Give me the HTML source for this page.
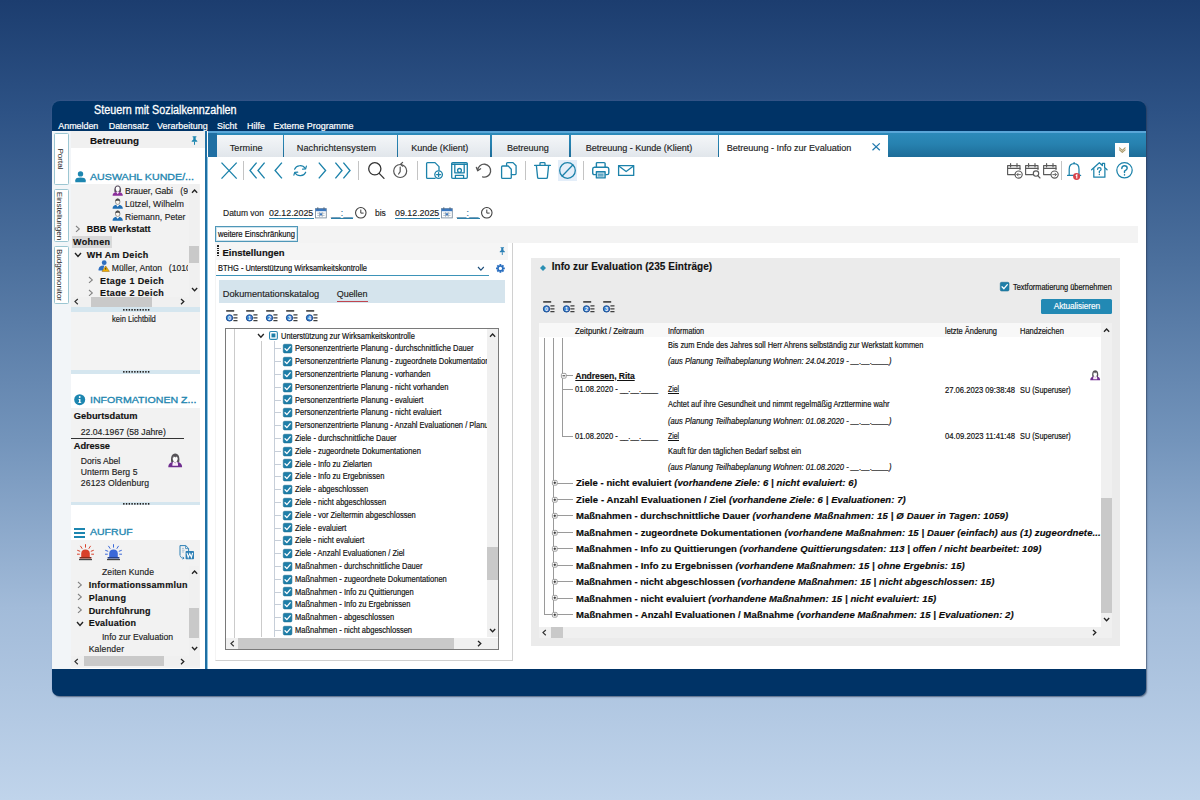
<!DOCTYPE html>
<html><head><meta charset="utf-8"><title>Steuern mit Sozialkennzahlen</title>
<style>
html,body{margin:0;padding:0;}
body{width:1200px;height:800px;overflow:hidden;position:relative;font-family:"Liberation Sans",sans-serif;color:#1a1a1a;
background:linear-gradient(180deg,#1c3d6f 0%,#2d5285 14%,#4c709d 33%,#7394bb 55%,#a2bbd9 76%,#c0d4eb 100%);}
div,svg,span.t{position:absolute;}
span.t{white-space:pre;}
svg{overflow:visible;}
</style></head><body>
<div style="left:52px;top:100.7px;width:1094px;height:595.3px;background:#003366;border-radius:8px 8px 7px 7px;box-shadow:1px 1px 1.5px rgba(30,45,70,.6),0 0 2px rgba(150,180,220,.25);"></div>
<div style="left:52.00px;top:131.20px;width:1094.00px;height:538.00px;background:#fff;"></div>
<span class="t" style="left:94.00px;top:103.72px;font-size:12.5px;line-height:1;color:#fff;transform:scaleX(0.8617);transform-origin:0 0;-webkit-text-stroke:.3px #fff;">Steuern mit Sozialkennzahlen</span>
<span class="t" style="left:58.30px;top:122.22px;font-size:8.95px;line-height:1;color:#fff;letter-spacing:-0.031px;-webkit-text-stroke:.2px #fff;">Anmelden</span>
<span class="t" style="left:108.70px;top:122.22px;font-size:8.95px;line-height:1;color:#fff;-webkit-text-stroke:.2px #fff;">Datensatz</span>
<span class="t" style="left:157.00px;top:122.22px;font-size:8.95px;line-height:1;color:#fff;-webkit-text-stroke:.2px #fff;">Verarbeitung</span>
<span class="t" style="left:217.00px;top:122.22px;font-size:8.95px;line-height:1;color:#fff;-webkit-text-stroke:.2px #fff;">Sicht</span>
<span class="t" style="left:247.00px;top:122.22px;font-size:8.95px;line-height:1;color:#fff;-webkit-text-stroke:.2px #fff;">Hilfe</span>
<span class="t" style="left:273.50px;top:122.22px;font-size:8.95px;line-height:1;color:#fff;-webkit-text-stroke:.2px #fff;">Externe Programme</span>
<div style="left:52.00px;top:131.20px;width:18.80px;height:538.00px;background:#f2f5f8;"></div>
<div style="left:53.7px;top:133.1px;width:15.3px;height:52.099999999999994px;background:#fff;border:1.2px solid #9cc6d2;border-radius:1.5px;box-sizing:border-box;"></div>
<span class="t" style="left:48.82px;top:155.10px;font-size:8.1px;line-height:1;transform:rotate(90deg);transform-origin:50% 50%;color:#222;">Portal</span>
<div style="left:53.7px;top:189.4px;width:15.3px;height:52.400000000000006px;background:#fff;border:1.2px solid #9cc6d2;border-radius:1.5px;box-sizing:border-box;"></div>
<span class="t" style="left:35.24px;top:211.58px;font-size:8.05px;line-height:1;transform:rotate(90deg);transform-origin:50% 50%;color:#222;">Einstellungen</span>
<div style="left:53.7px;top:246.4px;width:15.3px;height:57.599999999999994px;background:#fff;border:1.2px solid #9cc6d2;border-radius:1.5px;box-sizing:border-box;"></div>
<span class="t" style="left:33.38px;top:271.20px;font-size:8.0px;line-height:1;transform:rotate(90deg);transform-origin:50% 50%;color:#222;">Budgetmonitor</span>
<div style="left:70.80px;top:131.20px;width:134.40px;height:16.80px;background:#f0f0f0;"></div>
<span class="t" style="left:90.00px;top:136.20px;font-size:9.8px;line-height:1;font-weight:bold;color:#111;-webkit-text-stroke:.15px #111;">Betreuung</span>
<svg style="left:191.20px;top:135.60px;" width="7.00" height="9.00" viewBox="0 0 7 9"><path d="M1.6 0.3 H5.4 V1.2 H4.7 V3.6 L6.3 5 V5.7 H0.7 V5 L2.3 3.6 V1.2 H1.6 Z" fill="#1d86b0"/><path d="M3.5 5.7 V8.8" stroke="#1d86b0" stroke-width="1"/></svg>
<svg style="left:74.60px;top:170.80px;" width="11.00" height="11.40" viewBox="0 0 11 11.4"><circle cx="5.5" cy="2.9" r="2.7" fill="#1d86b0"/><path d="M0.3 11.2 V9.2 C0.3 7.2 2.4 6.5 5.5 6.5 C8.6 6.5 10.7 7.2 10.7 9.2 V11.2 Z" fill="#1d86b0"/></svg>
<span class="t" style="left:90.30px;top:172.60px;font-size:9.1px;line-height:1;color:#1d86b0;transform:scaleX(1.1716);transform-origin:0 0;-webkit-text-stroke:.3px #1d86b0;">AUSWAHL KUNDE/...</span>
<div style="left:70.80px;top:184.00px;width:129.20px;height:124.40px;background:#f2f2f2;"></div>
<div style="left:70.8px;top:184px;width:117.6px;height:112px;overflow:hidden;">
<svg style="left:41.00px;top:0.80px;" width="11.40" height="11.00" viewBox="0 0 12 12"><path d="M0.4 11.7 C0.4 9 2 8 4 7.5 H8 C10 8 11.6 9 11.6 11.7 Z" fill="#8b2f9b"/><path d="M2.5 7.6 C1.7 3.2 3.4 0.5 6 0.5 C8.6 0.5 10.3 3.2 9.5 7.6 Z" fill="#5a4f60"/><ellipse cx="6" cy="4.3" rx="2.15" ry="2.6" fill="#fff"/><path d="M4.3 7.6 L6 10 L7.7 7.6 L6 6.6 Z" fill="#f4e3f4"/></svg>
<span class="t" style="left:54.20px;top:3.42px;font-size:8.6px;line-height:1;color:#222;letter-spacing:-0.021px;-webkit-text-stroke:.15px #222;">Brauer, Gabi</span>
<span class="t" style="left:109.50px;top:3.42px;font-size:8.6px;line-height:1;color:#222;-webkit-text-stroke:.15px #222;">(9</span>
<svg style="left:41.00px;top:13.60px;" width="11.40" height="11.00" viewBox="0 0 12 12"><path d="M0.4 11.7 C0.4 8.9 2.2 7.9 4.2 7.4 L6 9.6 L7.8 7.4 C9.8 7.9 11.6 8.9 11.6 11.7 Z" fill="#1f6fb5"/><path d="M4.5 7.3 L6 9.3 L7.5 7.3 L6 6.8 Z" fill="#fff"/><ellipse cx="6" cy="4.1" rx="2.45" ry="3" fill="#fdf7ee" stroke="#777" stroke-width=".8"/><path d="M3.5 3.8 C3.3 1.5 4.6 0.6 6 0.6 C7.4 0.6 8.7 1.5 8.5 3.8 C7.7 2.7 4.3 2.7 3.5 3.8 Z" fill="#4c4c4c"/></svg>
<span class="t" style="left:54.20px;top:16.22px;font-size:8.6px;line-height:1;color:#222;letter-spacing:0.049px;-webkit-text-stroke:.15px #222;">Lützel, Wilhelm</span>
<svg style="left:41.00px;top:26.40px;" width="11.40" height="11.00" viewBox="0 0 12 12"><path d="M0.4 11.7 C0.4 8.9 2.2 7.9 4.2 7.4 L6 9.6 L7.8 7.4 C9.8 7.9 11.6 8.9 11.6 11.7 Z" fill="#1f6fb5"/><path d="M4.5 7.3 L6 9.3 L7.5 7.3 L6 6.8 Z" fill="#fff"/><ellipse cx="6" cy="4.1" rx="2.45" ry="3" fill="#fdf7ee" stroke="#777" stroke-width=".8"/><path d="M3.5 3.8 C3.3 1.5 4.6 0.6 6 0.6 C7.4 0.6 8.7 1.5 8.5 3.8 C7.7 2.7 4.3 2.7 3.5 3.8 Z" fill="#4c4c4c"/></svg>
<span class="t" style="left:54.20px;top:29.02px;font-size:8.6px;line-height:1;color:#222;letter-spacing:0.056px;-webkit-text-stroke:.15px #222;">Riemann, Peter</span>
<svg style="left:4.20px;top:41.20px;" width="5.30" height="7.80" viewBox="-1 -1 5.3 7.8"><path d="M0 0 L3.3 2.9 L0 5.8" fill="none" stroke="#808080" stroke-width="1.1"/></svg>
<span class="t" style="left:15.90px;top:41.48px;font-size:9.0px;line-height:1;font-weight:bold;color:#111;letter-spacing:0.088px;-webkit-text-stroke:.15px #111;">BBB Werkstatt</span>
<div style="left:0.90px;top:51.80px;width:40.80px;height:11.80px;background:#d9d9d9;"></div>
<span class="t" style="left:2.20px;top:54.28px;font-size:9.0px;line-height:1;font-weight:bold;color:#111;letter-spacing:0.329px;-webkit-text-stroke:.15px #111;">Wohnen</span>
<svg style="left:2.90px;top:67.80px;" width="8.00" height="5.40" viewBox="-1 -1 8 5.4"><path d="M0 0 L3.0 3.4 L6 0" fill="none" stroke="#222" stroke-width="1.4"/></svg>
<span class="t" style="left:15.90px;top:67.08px;font-size:9.0px;line-height:1;font-weight:bold;color:#111;letter-spacing:0.284px;-webkit-text-stroke:.15px #111;">WH Am Deich</span>
<svg style="left:27.20px;top:76.40px;" width="11.60" height="11.60" viewBox="0 0 12 12"><circle cx="6.4" cy="2.8" r="2.5" fill="#2f6fc0"/><path d="M0.6 9.6 C1 6.6 3.2 5.4 6.6 5.8 L5.2 10.8 H0.6 Z" fill="#2f6fc0"/><path d="M8 6.2 L11.8 11.8 H4.2 Z" fill="#f5b400" stroke="#8a5a00" stroke-width=".5"/><path d="M8 8 V10" stroke="#222" stroke-width=".9"/></svg>
<span class="t" style="left:40.90px;top:80.22px;font-size:8.6px;line-height:1;color:#222;letter-spacing:0.062px;-webkit-text-stroke:.15px #222;">Müller, Anton</span>
<span class="t" style="left:98.00px;top:80.22px;font-size:8.6px;line-height:1;color:#222;-webkit-text-stroke:.15px #222;">(1010</span>
<svg style="left:17.20px;top:92.40px;" width="5.30" height="7.80" viewBox="-1 -1 5.3 7.8"><path d="M0 0 L3.3 2.9 L0 5.8" fill="none" stroke="#808080" stroke-width="1.1"/></svg>
<span class="t" style="left:29.20px;top:92.68px;font-size:9.0px;line-height:1;font-weight:bold;color:#111;letter-spacing:0.398px;-webkit-text-stroke:.15px #111;">Etage 1 Deich</span>
<svg style="left:17.20px;top:105.20px;" width="5.30" height="7.80" viewBox="-1 -1 5.3 7.8"><path d="M0 0 L3.3 2.9 L0 5.8" fill="none" stroke="#808080" stroke-width="1.1"/></svg>
<span class="t" style="left:29.20px;top:105.48px;font-size:9.0px;line-height:1;font-weight:bold;color:#111;letter-spacing:0.398px;-webkit-text-stroke:.15px #111;">Etage 2 Deich</span>
</div>
<div style="left:189.00px;top:184.00px;width:10.40px;height:112.70px;background:#f0f0f0;"></div>
<div style="left:189.00px;top:245.80px;width:10.40px;height:17.50px;background:#c9c9c9;"></div>
<svg style="left:190.60px;top:188.80px;" width="7.20" height="4.80" viewBox="-1 -1 7.2 4.8"><path d="M0 2.8 L2.6 0 L5.2 2.8" fill="none" stroke="#222" stroke-width="1.3"/></svg>
<svg style="left:190.60px;top:287.40px;" width="7.20" height="4.80" viewBox="-1 -1 7.2 4.8"><path d="M0 0 L2.6 2.8 L5.2 0" fill="none" stroke="#222" stroke-width="1.3"/></svg>
<div style="left:70.80px;top:296.50px;width:129.20px;height:10.60px;background:#f0f0f0;"></div>
<div style="left:91.30px;top:296.50px;width:60.70px;height:10.60px;background:#c9c9c9;"></div>
<svg style="left:74.40px;top:298.20px;" width="4.80" height="7.20" viewBox="-1 -1 4.8 7.2"><path d="M2.8 0 L0 2.6 L2.8 5.2" fill="none" stroke="#333" stroke-width="1.2"/></svg>
<svg style="left:179.80px;top:298.20px;" width="4.80" height="7.20" viewBox="-1 -1 4.8 7.2"><path d="M0 0 L2.8 2.6 L0 5.2" fill="none" stroke="#222" stroke-width="1.3"/></svg>
<div style="left:189.00px;top:296.50px;width:11.00px;height:10.60px;background:#f0f0f0;"></div>
<div style="left:70.80px;top:307.10px;width:129.20px;height:4.60px;background:#d5e6ef;"></div>
<svg style="left:123.00px;top:308.65px;" width="27.00" height="1.70" viewBox="0 0 27 1.7"><g fill="#222"><rect x="0.00" y="0" width="1.45" height="1.7"/><rect x="2.78" y="0" width="1.45" height="1.7"/><rect x="5.56" y="0" width="1.45" height="1.7"/><rect x="8.34" y="0" width="1.45" height="1.7"/><rect x="11.12" y="0" width="1.45" height="1.7"/><rect x="13.90" y="0" width="1.45" height="1.7"/><rect x="16.68" y="0" width="1.45" height="1.7"/><rect x="19.46" y="0" width="1.45" height="1.7"/><rect x="22.24" y="0" width="1.45" height="1.7"/><rect x="25.02" y="0" width="1.45" height="1.7"/></g></svg>
<div style="left:70.80px;top:311.70px;width:129.20px;height:58.30px;background:#f3f3f3;"></div>
<span class="t" style="left:112.00px;top:315.29px;font-size:8.4px;line-height:1;transform:scaleX(0.9045);transform-origin:0 0;color:#222;-webkit-text-stroke:0.18px #222;">kein Lichtbild</span>
<div style="left:70.80px;top:369.70px;width:129.20px;height:4.00px;background:#d5e6ef;"></div>
<svg style="left:123.00px;top:370.95px;" width="27.00" height="1.70" viewBox="0 0 27 1.7"><g fill="#222"><rect x="0.00" y="0" width="1.45" height="1.7"/><rect x="2.78" y="0" width="1.45" height="1.7"/><rect x="5.56" y="0" width="1.45" height="1.7"/><rect x="8.34" y="0" width="1.45" height="1.7"/><rect x="11.12" y="0" width="1.45" height="1.7"/><rect x="13.90" y="0" width="1.45" height="1.7"/><rect x="16.68" y="0" width="1.45" height="1.7"/><rect x="19.46" y="0" width="1.45" height="1.7"/><rect x="22.24" y="0" width="1.45" height="1.7"/><rect x="25.02" y="0" width="1.45" height="1.7"/></g></svg>
<svg style="left:74.00px;top:394.40px;" width="11.40" height="11.40" viewBox="0 0 12 12"><circle cx="6" cy="6" r="5.8" fill="#1d86b0"/><circle cx="6" cy="3.2" r="1" fill="#fff"/><path d="M4.7 5.2 H6.8 V8.6 H7.6 V9.5 H4.5 V8.6 H5.3 V6.1 H4.7 Z" fill="#fff"/></svg>
<span class="t" style="left:90.30px;top:396.20px;font-size:9.1px;line-height:1;color:#1d86b0;transform:scaleX(1.1656);transform-origin:0 0;-webkit-text-stroke:.3px #1d86b0;">INFORMATIONEN Z...</span>
<div style="left:70.80px;top:408.00px;width:129.20px;height:93.70px;background:#f2f2f2;"></div>
<span class="t" style="left:73.80px;top:412.13px;font-size:9.3px;line-height:1;font-weight:bold;color:#111;letter-spacing:0.013px;-webkit-text-stroke:.15px #111;">Geburtsdatum</span>
<span class="t" style="left:80.80px;top:428.09px;font-size:8.64px;line-height:1;color:#222;letter-spacing:0.006px;-webkit-text-stroke:.15px #222;">22.04.1967 (58 Jahre)</span>
<div style="left:71.30px;top:437.80px;width:112.50px;height:1.00px;background:#333;"></div>
<span class="t" style="left:73.80px;top:442.03px;font-size:9.3px;line-height:1;font-weight:bold;color:#111;letter-spacing:-0.100px;-webkit-text-stroke:.15px #111;">Adresse</span>
<span class="t" style="left:80.80px;top:457.19px;font-size:8.64px;line-height:1;color:#222;letter-spacing:0.019px;-webkit-text-stroke:.15px #222;">Doris Abel</span>
<span class="t" style="left:80.80px;top:468.09px;font-size:8.64px;line-height:1;color:#222;letter-spacing:0.047px;-webkit-text-stroke:.15px #222;">Unterm Berg 5</span>
<span class="t" style="left:80.80px;top:478.89px;font-size:8.64px;line-height:1;color:#222;letter-spacing:0.122px;-webkit-text-stroke:.15px #222;">26123 Oldenburg</span>
<svg style="left:168.00px;top:452.70px;" width="14.40" height="14.60" viewBox="0 0 14.4 14.6"><path d="M3.3 9.6 C2.2 4.2 3.9 0.4 7.2 0.4 C10.5 0.4 12.2 4.2 11.1 9.6 Z" fill="#555257"/><path d="M0.3 14.3 C0.3 10.8 2.4 9.8 4.6 9.1 H9.8 C12 9.8 14.1 10.8 14.1 14.3 Z" fill="#6f2d8f"/><path d="M5 8.9 C4.5 10.4 4.1 12.2 4.5 12.7 H9.9 C10.3 12.2 9.9 10.4 9.4 8.9 L8.2 8.2 H6.2 Z" fill="#fbeefb"/><path d="M6.2 9.2 L7.2 9.9 L8.2 9.2" fill="none" stroke="#6a5a70" stroke-width=".5"/><path d="M7.2 2.9 C8.9 2.9 9.8 4.2 9.7 5.8 C9.6 7.7 8.5 9.1 7.2 9.1 C5.9 9.1 4.8 7.7 4.7 5.8 C4.6 4.2 5.5 2.9 7.2 2.9 Z" fill="#fff"/><path d="M4.8 5.4 C5.4 4 6.4 3.6 7.6 4.4 C8.2 3.8 9.2 3.8 9.6 5 C9.4 2.6 5 2.2 4.8 5.4 Z" fill="#555257"/></svg>
<div style="left:70.80px;top:501.50px;width:129.20px;height:3.80px;background:#d5e6ef;"></div>
<svg style="left:123.00px;top:502.65px;" width="27.00" height="1.70" viewBox="0 0 27 1.7"><g fill="#222"><rect x="0.00" y="0" width="1.45" height="1.7"/><rect x="2.78" y="0" width="1.45" height="1.7"/><rect x="5.56" y="0" width="1.45" height="1.7"/><rect x="8.34" y="0" width="1.45" height="1.7"/><rect x="11.12" y="0" width="1.45" height="1.7"/><rect x="13.90" y="0" width="1.45" height="1.7"/><rect x="16.68" y="0" width="1.45" height="1.7"/><rect x="19.46" y="0" width="1.45" height="1.7"/><rect x="22.24" y="0" width="1.45" height="1.7"/><rect x="25.02" y="0" width="1.45" height="1.7"/></g></svg>
<div style="left:74.00px;top:528.20px;width:11.30px;height:1.50px;background:#1d86b0;"></div>
<div style="left:74.00px;top:532.10px;width:11.30px;height:1.50px;background:#1d86b0;"></div>
<div style="left:74.00px;top:536.00px;width:11.30px;height:1.50px;background:#1d86b0;"></div>
<span class="t" style="left:90.30px;top:527.90px;font-size:9.1px;line-height:1;color:#1d86b0;transform:scaleX(1.1575);transform-origin:0 0;-webkit-text-stroke:.3px #1d86b0;">AUFRUF</span>
<div style="left:70.80px;top:539.70px;width:129.20px;height:128.80px;background:#f2f2f2;"></div>
<svg style="left:76.50px;top:543.60px;" width="17.00" height="16.40" viewBox="0 0 17 16.4"><path d="M4.2 13 V9.6 C4.2 6.8 6 5.4 8.5 5.4 C11 5.4 12.8 6.8 12.8 9.6 V13 Z" fill="#d8402a"/><rect x="2.6" y="13" width="11.8" height="1.6" fill="#8a2a1a"/><rect x="2" y="15" width="13" height="1.2" fill="#444"/><g stroke="#d8402a" stroke-width="1" stroke-linecap="round"><path d="M8.5 0.6 V3.2"/><path d="M3.6 2.2 L5 4.4"/><path d="M13.4 2.2 L12 4.4"/><path d="M0.6 6.4 L2.8 7.2"/><path d="M16.4 6.4 L14.2 7.2"/><path d="M0.4 10.2 H2.4"/><path d="M16.6 10.2 H14.6"/></g></svg>
<svg style="left:105.00px;top:543.60px;" width="17.00" height="16.40" viewBox="0 0 17 16.4"><path d="M4.2 13 V9.6 C4.2 6.8 6 5.4 8.5 5.4 C11 5.4 12.8 6.8 12.8 9.6 V13 Z" fill="#3a68d8"/><rect x="2.6" y="13" width="11.8" height="1.6" fill="#24408a"/><rect x="2" y="15" width="13" height="1.2" fill="#444"/><g stroke="#3a68d8" stroke-width="1" stroke-linecap="round"><path d="M8.5 0.6 V3.2"/><path d="M3.6 2.2 L5 4.4"/><path d="M13.4 2.2 L12 4.4"/><path d="M0.6 6.4 L2.8 7.2"/><path d="M16.4 6.4 L14.2 7.2"/><path d="M0.4 10.2 H2.4"/><path d="M16.6 10.2 H14.6"/></g></svg>
<svg style="left:179.00px;top:545.30px;" width="15.40" height="14.60" viewBox="0 0 15.4 14.6"><path d="M1 0.6 H6.8 L9.6 3.4 V6" fill="none" stroke="#2d7fb5" stroke-width="1"/><path d="M1 0.6 V10.4" stroke="#2d7fb5" stroke-width="1"/><path d="M6.6 0.8 V3.6 H9.4" fill="none" stroke="#2d7fb5" stroke-width=".8"/><path d="M3 3.4 H5 M3 5.2 H5.6 M3 7 H5" stroke="#8fb5d0" stroke-width=".8"/><path d="M1.2 10.6 C1.6 12.6 3 13.4 5 13.2 M5 13.2 L3.8 11.8 M5 13.2 L3.6 14.2" fill="none" stroke="#2d7fb5" stroke-width=".9"/><rect x="6.6" y="6" width="8.4" height="8.2" rx=".8" fill="#2d7fb5"/><path d="M8 7.8 L9.2 12.4 L10.8 8.6 L12.4 12.4 L13.6 7.8" fill="none" stroke="#fff" stroke-width="1.1"/></svg>
<div style="left:70.8px;top:560px;width:117.6px;height:95.6px;overflow:hidden;">
<span class="t" style="left:31.20px;top:8.32px;font-size:8.6px;line-height:1;color:#222;letter-spacing:0.073px;-webkit-text-stroke:.15px #222;">Zeiten Kunde</span>
<svg style="left:5.80px;top:20.55px;" width="5.30" height="7.80" viewBox="-1 -1 5.3 7.8"><path d="M0 0 L3.3 2.9 L0 5.8" fill="none" stroke="#808080" stroke-width="1.1"/></svg>
<span class="t" style="left:17.90px;top:20.83px;font-size:9.0px;line-height:1;font-weight:bold;color:#111;letter-spacing:0.262px;-webkit-text-stroke:.15px #111;">Informationssammlun</span>
<svg style="left:5.80px;top:33.40px;" width="5.30" height="7.80" viewBox="-1 -1 5.3 7.8"><path d="M0 0 L3.3 2.9 L0 5.8" fill="none" stroke="#808080" stroke-width="1.1"/></svg>
<span class="t" style="left:17.90px;top:33.68px;font-size:9.0px;line-height:1;font-weight:bold;color:#111;letter-spacing:0.286px;-webkit-text-stroke:.15px #111;">Planung</span>
<svg style="left:5.80px;top:46.25px;" width="5.30" height="7.80" viewBox="-1 -1 5.3 7.8"><path d="M0 0 L3.3 2.9 L0 5.8" fill="none" stroke="#808080" stroke-width="1.1"/></svg>
<span class="t" style="left:17.90px;top:46.53px;font-size:9.0px;line-height:1;font-weight:bold;color:#111;letter-spacing:0.167px;-webkit-text-stroke:.15px #111;">Durchführung</span>
<svg style="left:4.80px;top:61.00px;" width="8.00" height="5.40" viewBox="-1 -1 8 5.4"><path d="M0 0 L3.0 3.4 L6 0" fill="none" stroke="#222" stroke-width="1.4"/></svg>
<span class="t" style="left:17.90px;top:59.38px;font-size:9.0px;line-height:1;font-weight:bold;color:#111;letter-spacing:0.198px;-webkit-text-stroke:.15px #111;">Evaluation</span>
<span class="t" style="left:31.20px;top:72.57px;font-size:8.6px;line-height:1;color:#222;letter-spacing:-0.010px;-webkit-text-stroke:.15px #222;">Info zur Evaluation</span>
<span class="t" style="left:17.90px;top:85.42px;font-size:8.6px;line-height:1;color:#222;letter-spacing:0.137px;-webkit-text-stroke:.15px #222;">Kalender</span>
</div>
<div style="left:189.00px;top:566.00px;width:10.40px;height:89.80px;background:#f0f0f0;"></div>
<div style="left:189.00px;top:608.30px;width:10.40px;height:29.70px;background:#c9c9c9;"></div>
<svg style="left:190.60px;top:569.60px;" width="7.20" height="4.80" viewBox="-1 -1 7.2 4.8"><path d="M0 2.8 L2.6 0 L5.2 2.8" fill="none" stroke="#222" stroke-width="1.3"/></svg>
<svg style="left:190.60px;top:646.20px;" width="7.20" height="4.80" viewBox="-1 -1 7.2 4.8"><path d="M0 0 L2.6 2.8 L5.2 0" fill="none" stroke="#222" stroke-width="1.3"/></svg>
<div style="left:70.80px;top:655.80px;width:129.20px;height:10.60px;background:#f0f0f0;"></div>
<div style="left:84.00px;top:655.80px;width:79.80px;height:10.60px;background:#c9c9c9;"></div>
<svg style="left:74.40px;top:657.50px;" width="4.80" height="7.20" viewBox="-1 -1 4.8 7.2"><path d="M2.8 0 L0 2.6 L2.8 5.2" fill="none" stroke="#333" stroke-width="1.2"/></svg>
<svg style="left:179.80px;top:657.50px;" width="4.80" height="7.20" viewBox="-1 -1 4.8 7.2"><path d="M0 0 L2.8 2.6 L0 5.2" fill="none" stroke="#222" stroke-width="1.3"/></svg>
<div style="left:189.00px;top:655.80px;width:11.00px;height:10.60px;background:#f0f0f0;"></div>
<div style="left:205.10px;top:131.20px;width:1.80px;height:537.60px;background:#1f6fa3;"></div>
<div style="left:206.90px;top:157.00px;width:0.70px;height:511.80px;background:#8cc4e2;"></div>
<div style="left:207.60px;top:130.60px;width:938.40px;height:2.20px;background:#5aa6d8;"></div>
<div style="left:207.6px;top:132.8px;width:938.4px;height:24.4px;background:linear-gradient(180deg,#2c8aba 0%,#2782b0 45%,#1d6c98 100%);"></div>
<div style="left:207.60px;top:133.00px;width:9.00px;height:24.20px;background:#1f6fa3;"></div>
<div style="left:216.7px;top:135px;width:66.1px;height:22.2px;background:linear-gradient(180deg,#f4f6f8 0%,#e9edf1 60%,#e1e6eb 100%);"></div>
<span class="t" style="left:229.70px;top:144.00px;font-size:9.1px;line-height:1;color:#222;letter-spacing:0.094px;-webkit-text-stroke:.15px #222;">Termine</span>
<div style="left:284.2px;top:135px;width:112.4px;height:22.2px;background:linear-gradient(180deg,#f4f6f8 0%,#e9edf1 60%,#e1e6eb 100%);"></div>
<span class="t" style="left:296.70px;top:144.00px;font-size:9.1px;line-height:1;color:#222;letter-spacing:0.128px;-webkit-text-stroke:.15px #222;">Nachrichtensystem</span>
<div style="left:398px;top:135px;width:92.0px;height:22.2px;background:linear-gradient(180deg,#f4f6f8 0%,#e9edf1 60%,#e1e6eb 100%);"></div>
<span class="t" style="left:411.30px;top:144.00px;font-size:9.1px;line-height:1;color:#222;letter-spacing:-0.046px;-webkit-text-stroke:.15px #222;">Kunde (Klient)</span>
<div style="left:491.6px;top:135px;width:77.8px;height:22.2px;background:linear-gradient(180deg,#f4f6f8 0%,#e9edf1 60%,#e1e6eb 100%);"></div>
<span class="t" style="left:507.00px;top:144.00px;font-size:9.1px;line-height:1;color:#222;letter-spacing:-0.030px;-webkit-text-stroke:.15px #222;">Betreuung</span>
<div style="left:571px;top:135px;width:147.0px;height:22.2px;background:linear-gradient(180deg,#f4f6f8 0%,#e9edf1 60%,#e1e6eb 100%);"></div>
<span class="t" style="left:585.80px;top:144.00px;font-size:9.1px;line-height:1;color:#222;letter-spacing:-0.050px;-webkit-text-stroke:.15px #222;">Betreuung - Kunde (Klient)</span>
<div style="left:719.20px;top:135.00px;width:169.20px;height:22.40px;background:#fff;"></div>
<span class="t" style="left:726.70px;top:144.00px;font-size:9.1px;line-height:1;color:#222;letter-spacing:-0.025px;-webkit-text-stroke:.15px #222;">Betreuung - Info zur Evaluation</span>
<svg style="left:872.00px;top:143.30px;" width="8.30" height="7.70" viewBox="0 0 8.299999999999955 7.699999999999989"><g fill="none" stroke="#1f78ad" stroke-width="1.25" stroke-linejoin="round" stroke-linecap="round"><path d="M0.5 0.4 L7.8 7.3 M7.8 0.4 L0.5 7.3" stroke-linecap="butt"/></g></svg>
<div style="left:1115.00px;top:143.00px;width:13.80px;height:13.80px;background:#fdfdfd;"></div>
<svg style="left:1118.60px;top:147.00px;" width="6.60" height="6.40" viewBox="0 0 6.600000000000136 6.400000000000006"><g fill="none" stroke="#a89868" stroke-width="1.15" stroke-linejoin="round" stroke-linecap="round"><path d="M0.5 0.9 L3.3 3.4 L6.1 0.9 M0.5 2.9 L3.3 5.4 L6.1 2.9"/></g></svg>
<svg style="left:220.80px;top:162.00px;" width="16.20" height="17.00" viewBox="0 0 16.19999999999999 17"><g fill="none" stroke="#1c82aa" stroke-width="1.35" stroke-linejoin="round" stroke-linecap="round"><path d="M0.5 0.6 L15.7 16.6 M15.7 0.6 L0.5 16.6" stroke-linecap="butt"/></g></svg>
<div style="left:242.60px;top:160.50px;width:1.10px;height:19.40px;background:#c4c4c4;"></div>
<svg style="left:248.80px;top:162.00px;" width="15.90" height="17.00" viewBox="0 0 15.899999999999977 17"><g fill="none" stroke="#1c82aa" stroke-width="1.35" stroke-linejoin="round" stroke-linecap="round"><path d="M7.6 0.6 L1 8.5 L7.6 16.4 M15.6 0.6 L9 8.5 L15.6 16.4" stroke-linecap="butt" stroke-linejoin="miter"/></g></svg>
<svg style="left:274.00px;top:162.00px;" width="8.50" height="17.00" viewBox="0 0 8.5 17"><g fill="none" stroke="#1c82aa" stroke-width="1.35" stroke-linejoin="round" stroke-linecap="round"><path d="M7.9 0.6 L1.1 8.5 L7.9 16.4" stroke-linecap="butt" stroke-linejoin="miter"/></g></svg>
<svg style="left:292.00px;top:164.00px;" width="16.30" height="13.40" viewBox="0 0 16.30000000000001 13.400000000000006"><g fill="none" stroke="#1c82aa" stroke-width="1.2" stroke-linejoin="round" stroke-linecap="round"><path d="M2.6 5.2 A5.9 5.4 0 0 1 13.2 4.4"/><path d="M13.7 8.2 A5.9 5.4 0 0 1 3.1 9"/><path d="M10.6 5.2 L13.6 5 L14.4 2.2" /><path d="M5.7 8.2 L2.7 8.4 L1.9 11.2"/></g></svg>
<svg style="left:318.00px;top:162.00px;" width="8.70" height="17.00" viewBox="0 0 8.699999999999989 17"><g fill="none" stroke="#1c82aa" stroke-width="1.35" stroke-linejoin="round" stroke-linecap="round"><path d="M0.8 0.6 L7.6 8.5 L0.8 16.4" stroke-linecap="butt" stroke-linejoin="miter"/></g></svg>
<svg style="left:335.00px;top:162.00px;" width="16.00" height="17.00" viewBox="0 0 16 17"><g fill="none" stroke="#1c82aa" stroke-width="1.35" stroke-linejoin="round" stroke-linecap="round"><path d="M0.4 0.6 L7 8.5 L0.4 16.4 M8.4 0.6 L15 8.5 L8.4 16.4" stroke-linecap="butt" stroke-linejoin="miter"/></g></svg>
<div style="left:358.20px;top:160.50px;width:1.10px;height:19.40px;background:#c4c4c4;"></div>
<svg style="left:367.50px;top:162.00px;" width="16.50" height="17.00" viewBox="0 0 16.5 17"><g fill="none" stroke="#333" stroke-width="1.3" stroke-linejoin="round" stroke-linecap="round"><circle cx="6.8" cy="6.8" r="6.1"/><path d="M11.2 11.4 L16 16.4"/></g></svg>
<svg style="left:393.30px;top:162.00px;" width="14.70" height="16.00" viewBox="0 0 14.699999999999989 16"><g fill="none" stroke="#555" stroke-width="1.2" stroke-linejoin="round" stroke-linecap="round"><circle cx="7.2" cy="9" r="6.5"/><path d="M7.2 9.6 L7.2 5 M7.2 9.6 L5.6 12"/><path d="M9.6 0.4 L7.6 2.3 L9.8 4.2"/></g></svg>
<div style="left:416.50px;top:160.50px;width:1.10px;height:19.40px;background:#c4c4c4;"></div>
<svg style="left:426.00px;top:162.00px;" width="17.00" height="17.00" viewBox="0 0 17 17"><g fill="none" stroke="#1c82aa" stroke-width="1.3" stroke-linejoin="round" stroke-linecap="round"><path d="M9 16.4 H1.6 Q0.6 16.4 0.6 15.4 V1.6 Q0.6 0.6 1.6 0.6 H9 L13 4.6 V8.2"/><circle cx="12.6" cy="12.6" r="3.8"/><path d="M12.6 10.6 V14.6 M10.6 12.6 H14.6"/></g></svg>
<svg style="left:450.80px;top:162.00px;" width="17.00" height="17.00" viewBox="0 0 17.0 17"><g fill="none" stroke="#1c82aa" stroke-width="1.3" stroke-linejoin="round" stroke-linecap="round"><path d="M1.8 0.7 H15.2 Q16.3 0.7 16.3 1.8 V15.2 Q16.3 16.3 15.2 16.3 H1.8 Q0.7 16.3 0.7 15.2 V1.8 Q0.7 0.7 1.8 0.7 Z"/><path d="M0.8 2.2 H16.2" stroke-width="1.6"/><path d="M3.8 2.2 V10.8 H13.2 V2.2"/><circle cx="8.5" cy="8.4" r="1.9"/><path d="M4.4 16.2 V13.4 H12.6 V16.2"/></g></svg>
<svg style="left:476.30px;top:162.00px;" width="16.20" height="17.00" viewBox="0 0 16.19999999999999 17"><g fill="none" stroke="#555" stroke-width="1.3" stroke-linejoin="round" stroke-linecap="round"><path d="M1.7 8.4 A6.5 6.5 0 1 1 6.6 15"/><path d="M0.4 5.4 L1.7 8.8 L4.6 6.8"/></g></svg>
<svg style="left:501.00px;top:162.00px;" width="15.70" height="17.00" viewBox="0 0 15.700000000000045 17"><g fill="none" stroke="#1c82aa" stroke-width="1.3" stroke-linejoin="round" stroke-linecap="round"><path d="M5.6 3.6 V1.6 Q5.6 0.6 6.6 0.6 H12 L15.1 3.8 V11.6 Q15.1 12.6 14.1 12.6 H10.4"/><path d="M1.6 4 H7.2 L10.3 7.2 V15.4 Q10.3 16.4 9.3 16.4 H1.6 Q0.6 16.4 0.6 15.4 V5 Q0.6 4 1.6 4 Z"/></g></svg>
<div style="left:524.80px;top:160.50px;width:1.10px;height:19.40px;background:#c4c4c4;"></div>
<svg style="left:534.00px;top:162.00px;" width="17.00" height="17.00" viewBox="0 0 17 17"><g fill="none" stroke="#1c82aa" stroke-width="1.3" stroke-linejoin="round" stroke-linecap="round"><path d="M0.6 3.4 H16.4"/><path d="M6 3.2 V1.4 Q6 0.6 6.8 0.6 H10.2 Q11 0.6 11 1.4 V3.2"/><path d="M2.4 3.6 L3.6 15.4 Q3.7 16.4 4.7 16.4 H12.3 Q13.3 16.4 13.4 15.4 L14.6 3.6"/></g></svg>
<div style="left:557.80px;top:159.60px;width:19.00px;height:21.00px;background:#e4eef9;"></div>
<svg style="left:559.00px;top:162.00px;" width="17.00" height="17.00" viewBox="0 0 17 17"><g fill="none" stroke="#1c82aa" stroke-width="1.3" stroke-linejoin="round" stroke-linecap="round"><circle cx="8.5" cy="8.5" r="7.8"/><path d="M13.8 3 L3.2 14"/></g></svg>
<div style="left:582.80px;top:160.50px;width:1.10px;height:19.40px;background:#c4c4c4;"></div>
<svg style="left:592.00px;top:162.00px;" width="17.50" height="16.50" viewBox="0 0 17.5 16.5"><g fill="none" stroke="#1c82aa" stroke-width="1.4" stroke-linejoin="round" stroke-linecap="round"><path d="M4.4 5 V1.6 Q4.4 0.6 5.4 0.6 H12.1 Q13.1 0.6 13.1 1.6 V5"/><path d="M3.6 12.6 H2.4 Q0.7 12.6 0.7 10.9 V7 Q0.7 5.2 2.4 5.2 H15.1 Q16.8 5.2 16.8 7 V10.9 Q16.8 12.6 15.1 12.6 H13.9"/><path d="M4.4 9.8 H13.1 V15.9 H4.4 Z" fill="#cfe3ee"/><path d="M6.4 12.2 H11.1 M6.4 13.9 H11.1" stroke-width=".9"/></g></svg>
<svg style="left:617.50px;top:165.00px;" width="16.30" height="11.00" viewBox="0 0 16.299999999999955 11"><g fill="none" stroke="#1c82aa" stroke-width="1.3" stroke-linejoin="round" stroke-linecap="round"><rect x="0.6" y="0.6" width="15.1" height="9.8"/><path d="M0.8 0.9 L8.15 6.6 L15.5 0.9"/></g></svg>
<svg style="left:1007.00px;top:162.50px;" width="16.00" height="15.80" viewBox="0 0 16 15.800000000000011"><g fill="none" stroke="#5a5a5a" stroke-width="1.15" stroke-linejoin="round" stroke-linecap="round"><path d="M0.6 2.6 H13 V6.6 M0.6 2.6 V11.6 H7.6"/><path d="M0.6 5.4 H13"/><path d="M3.6 0.6 V4 M10 0.6 V4"/><circle cx="11.6" cy="11.6" r="3.6"/><path d="M13.4 11.6 H10 M11.2 10.2 L9.8 11.6 L11.2 13" stroke-width=".9"/></g></svg>
<svg style="left:1025.30px;top:162.50px;" width="16.00" height="15.80" viewBox="0 0 16.0 15.800000000000011"><g fill="none" stroke="#5a5a5a" stroke-width="1.15" stroke-linejoin="round" stroke-linecap="round"><path d="M0.6 2.6 H13 V6.6 M0.6 2.6 V11.6 H7.6"/><path d="M0.6 5.4 H13"/><path d="M3.6 0.6 V4 M10 0.6 V4"/><circle cx="11" cy="10.6" r="2.7"/><path d="M13 12.8 L15 15"/></g></svg>
<svg style="left:1043.30px;top:162.50px;" width="16.00" height="15.80" viewBox="0 0 16.0 15.800000000000011"><g fill="none" stroke="#5a5a5a" stroke-width="1.15" stroke-linejoin="round" stroke-linecap="round"><path d="M0.6 2.6 H13 V6.6 M0.6 2.6 V11.6 H7.6"/><path d="M0.6 5.4 H13"/><path d="M3.6 0.6 V4 M10 0.6 V4"/><circle cx="11.6" cy="11.6" r="3.6"/><path d="M9.8 11.6 H13.2 M12 10.2 L13.4 11.6 L12 13" stroke-width=".9"/></g></svg>
<div style="left:1061.30px;top:160.50px;width:1.10px;height:19.40px;background:#c4c4c4;"></div>
<svg style="left:1066.70px;top:162.00px;" width="14.30" height="17.60" viewBox="0 0 14.299999999999955 17.599999999999994"><g fill="none" stroke="#1c82aa" stroke-width="1.25" stroke-linejoin="round" stroke-linecap="round"><path d="M0.6 13.4 H13.6"/><path d="M2.2 13.2 V7.2 Q2.2 1.6 7.1 1.6 Q12 1.6 12 7.2 V13.2"/><path d="M7.1 0.5 V1.6"/></g></svg>
<svg style="left:1073.20px;top:172.60px;" width="7.20" height="7.20" viewBox="0 0 7.2 7.2"><circle cx="3.6" cy="3.6" r="3.5" fill="#d9434a"/><path d="M2.7 2.6 L3.8 1.8 V5.6" fill="none" stroke="#fff" stroke-width="1.1"/></svg>
<svg style="left:1090.80px;top:162.00px;" width="16.70" height="15.80" viewBox="0 0 16.700000000000045 15.800000000000011"><g fill="none" stroke="#1c82aa" stroke-width="1.25" stroke-linejoin="round" stroke-linecap="round"><path d="M0.6 7.8 L8.35 0.7 L11.4 3.5 V1.4 H13.6 V5.5 L16.1 7.8"/><path d="M2.8 6.6 V15.2 H13.9 V6.6"/><path d="M6.6 7.3 Q6.6 5.6 8.35 5.6 Q10.1 5.6 10.1 7.2 Q10.1 8.2 8.35 9.2 V10.4 M8.35 12.2 V12.6" stroke-width="1.3"/></g></svg>
<svg style="left:1115.50px;top:162.00px;" width="17.00" height="16.60" viewBox="0 0 17.0 16.599999999999994"><g fill="none" stroke="#1c82aa" stroke-width="1.25" stroke-linejoin="round" stroke-linecap="round"><circle cx="8.5" cy="8.3" r="7.7"/><path d="M5.8 6.6 Q5.8 3.8 8.5 3.8 Q11.2 3.8 11.2 6.3 Q11.2 7.8 8.5 9.2 V10.6 M8.5 12.6 V13.1" stroke-width="1.4"/></g></svg>
<span class="t" style="left:223.00px;top:209.00px;font-size:8.5px;line-height:1;color:#222;letter-spacing:-0.012px;-webkit-text-stroke:.15px #222;">Datum von</span>
<span class="t" style="left:269.00px;top:208.71px;font-size:8.85px;line-height:1;color:#222;-webkit-text-stroke:.15px #222;">02.12.2025</span>
<div style="left:269.00px;top:217.60px;width:44.80px;height:1.00px;background:#2d7fa8;"></div>
<svg style="left:315.00px;top:207.00px;" width="11.80" height="11.40" viewBox="0 0 11.8 11.4"><rect x="0.5" y="1.6" width="10.8" height="9.3" fill="#fff" stroke="#7d8fa0" stroke-width=".9"/><rect x="0.5" y="1.6" width="10.8" height="2.6" fill="#3b78c0"/><path d="M2.8 0.3 V2.6 M9 0.3 V2.6" stroke="#56687a" stroke-width="1"/><path d="M2.2 6.2 H9.6 M2.2 8.4 H9.6 M4.6 5 V10 M7.2 5 V10" stroke="#8fa0b2" stroke-width=".7"/><rect x="4.8" y="6.4" width="2.2" height="1.8" fill="#3b78c0"/></svg>
<span class="t" style="left:331.00px;top:209.00px;font-size:8.5px;line-height:1;color:#2d6f98;letter-spacing:0.144px;-webkit-text-stroke:.15px #2d6f98;">__:__</span>
<div style="left:331.00px;top:217.60px;width:22.40px;height:1.00px;background:#2d7fa8;"></div>
<svg style="left:355.00px;top:206.80px;" width="11.60" height="11.60" viewBox="0 0 11.6 11.6"><circle cx="5.8" cy="5.8" r="5.25" fill="#fff" stroke="#3c3c3c" stroke-width="1.05"/><path d="M5.8 2.6 V6.1 H8.6" fill="none" stroke="#3c3c3c" stroke-width="1"/></svg>
<span class="t" style="left:375.00px;top:209.00px;font-size:8.5px;line-height:1;color:#222;letter-spacing:-0.025px;-webkit-text-stroke:.15px #222;">bis</span>
<span class="t" style="left:395.00px;top:208.71px;font-size:8.85px;line-height:1;color:#222;-webkit-text-stroke:.15px #222;">09.12.2025</span>
<div style="left:395.00px;top:217.60px;width:45.00px;height:1.00px;background:#2d7fa8;"></div>
<svg style="left:440.80px;top:207.00px;" width="11.80" height="11.40" viewBox="0 0 11.8 11.4"><rect x="0.5" y="1.6" width="10.8" height="9.3" fill="#fff" stroke="#7d8fa0" stroke-width=".9"/><rect x="0.5" y="1.6" width="10.8" height="2.6" fill="#3b78c0"/><path d="M2.8 0.3 V2.6 M9 0.3 V2.6" stroke="#56687a" stroke-width="1"/><path d="M2.2 6.2 H9.6 M2.2 8.4 H9.6 M4.6 5 V10 M7.2 5 V10" stroke="#8fa0b2" stroke-width=".7"/><rect x="4.8" y="6.4" width="2.2" height="1.8" fill="#3b78c0"/></svg>
<span class="t" style="left:456.70px;top:209.00px;font-size:8.5px;line-height:1;color:#2d6f98;letter-spacing:0.144px;-webkit-text-stroke:.15px #2d6f98;">__:__</span>
<div style="left:456.70px;top:217.60px;width:23.00px;height:1.00px;background:#2d7fa8;"></div>
<svg style="left:481.00px;top:206.80px;" width="11.60" height="11.60" viewBox="0 0 11.6 11.6"><circle cx="5.8" cy="5.8" r="5.25" fill="#fff" stroke="#3c3c3c" stroke-width="1.05"/><path d="M5.8 2.6 V6.1 H8.6" fill="none" stroke="#3c3c3c" stroke-width="1"/></svg>
<div style="left:215.30px;top:226.30px;width:922.70px;height:16.40px;background:#f3f3f3;"></div>
<div style="left:215.3px;top:226.3px;width:83px;height:15.9px;box-sizing:border-box;border:1px solid #4f97b8;background:#fff;box-shadow:inset 0 0 0 1px #cfe3ec;"></div>
<span class="t" style="left:218.20px;top:229.79px;font-size:8.4px;line-height:1;transform:scaleX(0.9087);transform-origin:0 0;color:#111;-webkit-text-stroke:0.18px #111;">weitere Einschränkung</span>
<div style="left:215.3px;top:242.6px;width:297.6px;height:418px;box-sizing:border-box;border:1px solid #d0d0d0;border-top:none;border-left:1px solid #f4f4f4;background:#fff;"></div>
<div style="left:215.30px;top:242.60px;width:292.80px;height:17.00px;background:#f5f5f5;"></div>
<div style="left:217.10px;top:245.40px;width:1.50px;height:1.40px;background:#222;"></div>
<div style="left:217.10px;top:247.75px;width:1.50px;height:1.40px;background:#222;"></div>
<div style="left:217.10px;top:250.10px;width:1.50px;height:1.40px;background:#222;"></div>
<div style="left:217.10px;top:252.45px;width:1.50px;height:1.40px;background:#222;"></div>
<div style="left:217.10px;top:254.80px;width:1.50px;height:1.40px;background:#222;"></div>
<span class="t" style="left:222.50px;top:247.69px;font-size:9.46px;line-height:1;font-weight:bold;color:#111;-webkit-text-stroke:.15px #111;">Einstellungen</span>
<svg style="left:498.80px;top:246.80px;" width="6.60" height="8.20" viewBox="0 0 7 9"><path d="M1.6 0.3 H5.4 V1.2 H4.7 V3.6 L6.3 5 V5.7 H0.7 V5 L2.3 3.6 V1.2 H1.6 Z" fill="#2a7fb5"/><path d="M3.5 5.7 V8.8" stroke="#2a7fb5" stroke-width="1"/></svg>
<span class="t" style="left:218.00px;top:264.09px;font-size:8.4px;line-height:1;transform:scaleX(0.8942);transform-origin:0 0;color:#111;-webkit-text-stroke:0.18px #111;">BTHG - Unterstützung Wirksamkeitskontrolle</span>
<div style="left:215.80px;top:274.80px;width:273.40px;height:1.10px;background:#3d93b8;"></div>
<svg style="left:477.40px;top:265.80px;" width="7.80" height="5.20" viewBox="-1 -1 7.8 5.2"><path d="M0 0 L2.9 3.2 L5.8 0" fill="none" stroke="#1d4e7a" stroke-width="1.15"/></svg>
<svg style="left:495.60px;top:263.60px;" width="8.80" height="8.80" viewBox="-4.4 -4.4 8.8 8.8"><g fill="#2a6fc0"><rect x="-0.9" y="-4.4" width="1.8" height="2" transform="rotate(0)"/><rect x="-0.9" y="-4.4" width="1.8" height="2" transform="rotate(45)"/><rect x="-0.9" y="-4.4" width="1.8" height="2" transform="rotate(90)"/><rect x="-0.9" y="-4.4" width="1.8" height="2" transform="rotate(135)"/><rect x="-0.9" y="-4.4" width="1.8" height="2" transform="rotate(180)"/><rect x="-0.9" y="-4.4" width="1.8" height="2" transform="rotate(225)"/><rect x="-0.9" y="-4.4" width="1.8" height="2" transform="rotate(270)"/><rect x="-0.9" y="-4.4" width="1.8" height="2" transform="rotate(315)"/></g><circle r="2.4" fill="none" stroke="#2a6fc0" stroke-width="1.5"/></svg>
<div style="left:219.00px;top:280.00px;width:286.40px;height:22.70px;background:#d5e4ed;"></div>
<span class="t" style="left:222.80px;top:289.90px;font-size:9.22px;line-height:1;color:#222;-webkit-text-stroke:.15px #222;">Dokumentationskatalog</span>
<span class="t" style="left:336.70px;top:290.08px;font-size:9.0px;line-height:1;color:#222;letter-spacing:-0.033px;-webkit-text-stroke:.15px #222;">Quellen</span>
<div style="left:336.70px;top:300.80px;width:30.90px;height:1.20px;background:#c0454f;"></div>
<svg style="left:226.30px;top:310.00px;" width="11.60" height="11.40" viewBox="0 0 11.6 11.4"><rect x="0.2" y="0.1" width="8" height="1.6" fill="#3e3e3e"/><circle cx="3.5" cy="7.9" r="3.2" fill="#3d82d2" stroke="#1b4888" stroke-width=".9"/><text x="3.5" y="9.9" font-size="5.4" font-weight="bold" text-anchor="middle" fill="#fff" font-family="Liberation Sans">0</text><path d="M7.4 5 H11.5 M7.4 7.8 H11.5 M7.4 10.6 H11.5" stroke="#3e3e3e" stroke-width="1.25"/></svg>
<svg style="left:246.25px;top:310.00px;" width="11.60" height="11.40" viewBox="0 0 11.6 11.4"><rect x="0.2" y="0.1" width="8" height="1.6" fill="#3e3e3e"/><circle cx="3.5" cy="7.9" r="3.2" fill="#3d82d2" stroke="#1b4888" stroke-width=".9"/><text x="3.5" y="9.9" font-size="5.4" font-weight="bold" text-anchor="middle" fill="#fff" font-family="Liberation Sans">1</text><path d="M7.4 5 H11.5 M7.4 7.8 H11.5 M7.4 10.6 H11.5" stroke="#3e3e3e" stroke-width="1.25"/></svg>
<svg style="left:266.20px;top:310.00px;" width="11.60" height="11.40" viewBox="0 0 11.6 11.4"><rect x="0.2" y="0.1" width="8" height="1.6" fill="#3e3e3e"/><circle cx="3.5" cy="7.9" r="3.2" fill="#3d82d2" stroke="#1b4888" stroke-width=".9"/><text x="3.5" y="9.9" font-size="5.4" font-weight="bold" text-anchor="middle" fill="#fff" font-family="Liberation Sans">2</text><path d="M7.4 5 H11.5 M7.4 7.8 H11.5 M7.4 10.6 H11.5" stroke="#3e3e3e" stroke-width="1.25"/></svg>
<svg style="left:286.15px;top:310.00px;" width="11.60" height="11.40" viewBox="0 0 11.6 11.4"><rect x="0.2" y="0.1" width="8" height="1.6" fill="#3e3e3e"/><circle cx="3.5" cy="7.9" r="3.2" fill="#3d82d2" stroke="#1b4888" stroke-width=".9"/><text x="3.5" y="9.9" font-size="5.4" font-weight="bold" text-anchor="middle" fill="#fff" font-family="Liberation Sans">3</text><path d="M7.4 5 H11.5 M7.4 7.8 H11.5 M7.4 10.6 H11.5" stroke="#3e3e3e" stroke-width="1.25"/></svg>
<svg style="left:306.10px;top:310.00px;" width="11.60" height="11.40" viewBox="0 0 11.6 11.4"><rect x="0.2" y="0.1" width="8" height="1.6" fill="#3e3e3e"/><circle cx="3.5" cy="7.9" r="3.2" fill="#3d82d2" stroke="#1b4888" stroke-width=".9"/><text x="3.5" y="9.9" font-size="5.4" font-weight="bold" text-anchor="middle" fill="#fff" font-family="Liberation Sans">4</text><path d="M7.4 5 H11.5 M7.4 7.8 H11.5 M7.4 10.6 H11.5" stroke="#3e3e3e" stroke-width="1.25"/></svg>
<div style="left:225px;top:328.3px;width:273.6px;height:321.4px;box-sizing:border-box;border:1px solid #7a7a7a;background:#fff;overflow:hidden;">
<div style="left:7.80px;top:0.00px;width:1.00px;height:309.00px;background:#cbcbcb;"></div>
<div style="left:35.00px;top:12.20px;width:1.00px;height:296.00px;background:#cbcbcb;"></div>
<div style="left:48.40px;top:12.20px;width:1.00px;height:296.00px;background:#c6ced8;"></div>
<svg style="left:31.00px;top:3.40px;" width="7.80" height="5.30" viewBox="-1 -1 7.8 5.3"><path d="M0 0 L2.9 3.3 L5.8 0" fill="none" stroke="#222" stroke-width="1.3"/></svg>
<svg style="left:43.00px;top:1.90px;" width="8.90" height="8.90" viewBox="0 0 10 10"><rect x="0.6" y="0.6" width="8.8" height="8.8" rx="1.6" fill="#fff" stroke="#2a86b0" stroke-width="1.25"/><rect x="2.8" y="2.8" width="4.4" height="4.4" fill="#1e7ea8"/></svg>
<span class="t" style="left:55.30px;top:2.59px;font-size:8.4px;line-height:1;transform:scaleX(0.8927);transform-origin:0 0;color:#111;-webkit-text-stroke:0.18px #111;">Unterstützung zur Wirksamkeitskontrolle</span>
<div style="left:0;top:0;width:260.6px;height:308.2px;overflow:hidden;">
<div style="left:49.00px;top:19.10px;width:6.00px;height:1.00px;background:#c6ced8;"></div>
<svg style="left:56.50px;top:14.90px;" width="9.20" height="9.20" viewBox="0 0 10 10"><rect x="0.3" y="0.3" width="9.4" height="9.4" rx="1.4" fill="#1e7ea8" stroke="#1a6c90" stroke-width=".6"/><path d="M2.2 5.2 L4.2 7.2 L7.9 2.9" fill="none" stroke="#fff" stroke-width="1.4" stroke-linecap="round" stroke-linejoin="round"/></svg>
<span class="t" style="left:68.80px;top:15.19px;font-size:8.4px;line-height:1;transform:scaleX(0.8979);transform-origin:0 0;color:#111;-webkit-text-stroke:0.18px #111;">Personenzentrierte Planung - durchschnittliche Dauer</span>
<div style="left:49.00px;top:31.90px;width:6.00px;height:1.00px;background:#c6ced8;"></div>
<svg style="left:56.50px;top:27.70px;" width="9.20" height="9.20" viewBox="0 0 10 10"><rect x="0.3" y="0.3" width="9.4" height="9.4" rx="1.4" fill="#1e7ea8" stroke="#1a6c90" stroke-width=".6"/><path d="M2.2 5.2 L4.2 7.2 L7.9 2.9" fill="none" stroke="#fff" stroke-width="1.4" stroke-linecap="round" stroke-linejoin="round"/></svg>
<span class="t" style="left:68.80px;top:27.99px;font-size:8.4px;line-height:1;transform:scaleX(0.8979);transform-origin:0 0;color:#111;-webkit-text-stroke:0.18px #111;">Personenzentrierte Planung - zugeordnete Dokumentationen</span>
<div style="left:49.00px;top:44.70px;width:6.00px;height:1.00px;background:#c6ced8;"></div>
<svg style="left:56.50px;top:40.50px;" width="9.20" height="9.20" viewBox="0 0 10 10"><rect x="0.3" y="0.3" width="9.4" height="9.4" rx="1.4" fill="#1e7ea8" stroke="#1a6c90" stroke-width=".6"/><path d="M2.2 5.2 L4.2 7.2 L7.9 2.9" fill="none" stroke="#fff" stroke-width="1.4" stroke-linecap="round" stroke-linejoin="round"/></svg>
<span class="t" style="left:68.80px;top:40.79px;font-size:8.4px;line-height:1;transform:scaleX(0.8979);transform-origin:0 0;color:#111;-webkit-text-stroke:0.18px #111;">Personenzentrierte Planung - vorhanden</span>
<div style="left:49.00px;top:57.50px;width:6.00px;height:1.00px;background:#c6ced8;"></div>
<svg style="left:56.50px;top:53.30px;" width="9.20" height="9.20" viewBox="0 0 10 10"><rect x="0.3" y="0.3" width="9.4" height="9.4" rx="1.4" fill="#1e7ea8" stroke="#1a6c90" stroke-width=".6"/><path d="M2.2 5.2 L4.2 7.2 L7.9 2.9" fill="none" stroke="#fff" stroke-width="1.4" stroke-linecap="round" stroke-linejoin="round"/></svg>
<span class="t" style="left:68.80px;top:53.59px;font-size:8.4px;line-height:1;transform:scaleX(0.8979);transform-origin:0 0;color:#111;-webkit-text-stroke:0.18px #111;">Personenzentrierte Planung - nicht vorhanden</span>
<div style="left:49.00px;top:70.30px;width:6.00px;height:1.00px;background:#c6ced8;"></div>
<svg style="left:56.50px;top:66.10px;" width="9.20" height="9.20" viewBox="0 0 10 10"><rect x="0.3" y="0.3" width="9.4" height="9.4" rx="1.4" fill="#1e7ea8" stroke="#1a6c90" stroke-width=".6"/><path d="M2.2 5.2 L4.2 7.2 L7.9 2.9" fill="none" stroke="#fff" stroke-width="1.4" stroke-linecap="round" stroke-linejoin="round"/></svg>
<span class="t" style="left:68.80px;top:66.39px;font-size:8.4px;line-height:1;transform:scaleX(0.8979);transform-origin:0 0;color:#111;-webkit-text-stroke:0.18px #111;">Personenzentrierte Planung - evaluiert</span>
<div style="left:49.00px;top:83.10px;width:6.00px;height:1.00px;background:#c6ced8;"></div>
<svg style="left:56.50px;top:78.90px;" width="9.20" height="9.20" viewBox="0 0 10 10"><rect x="0.3" y="0.3" width="9.4" height="9.4" rx="1.4" fill="#1e7ea8" stroke="#1a6c90" stroke-width=".6"/><path d="M2.2 5.2 L4.2 7.2 L7.9 2.9" fill="none" stroke="#fff" stroke-width="1.4" stroke-linecap="round" stroke-linejoin="round"/></svg>
<span class="t" style="left:68.80px;top:79.19px;font-size:8.4px;line-height:1;transform:scaleX(0.8979);transform-origin:0 0;color:#111;-webkit-text-stroke:0.18px #111;">Personenzentrierte Planung - nicht evaluiert</span>
<div style="left:49.00px;top:95.90px;width:6.00px;height:1.00px;background:#c6ced8;"></div>
<svg style="left:56.50px;top:91.70px;" width="9.20" height="9.20" viewBox="0 0 10 10"><rect x="0.3" y="0.3" width="9.4" height="9.4" rx="1.4" fill="#1e7ea8" stroke="#1a6c90" stroke-width=".6"/><path d="M2.2 5.2 L4.2 7.2 L7.9 2.9" fill="none" stroke="#fff" stroke-width="1.4" stroke-linecap="round" stroke-linejoin="round"/></svg>
<span class="t" style="left:68.80px;top:91.99px;font-size:8.4px;line-height:1;transform:scaleX(0.8979);transform-origin:0 0;color:#111;-webkit-text-stroke:0.18px #111;">Personenzentrierte Planung - Anzahl Evaluationen / Planung</span>
<div style="left:49.00px;top:108.70px;width:6.00px;height:1.00px;background:#c6ced8;"></div>
<svg style="left:56.50px;top:104.50px;" width="9.20" height="9.20" viewBox="0 0 10 10"><rect x="0.3" y="0.3" width="9.4" height="9.4" rx="1.4" fill="#1e7ea8" stroke="#1a6c90" stroke-width=".6"/><path d="M2.2 5.2 L4.2 7.2 L7.9 2.9" fill="none" stroke="#fff" stroke-width="1.4" stroke-linecap="round" stroke-linejoin="round"/></svg>
<span class="t" style="left:68.80px;top:104.79px;font-size:8.4px;line-height:1;transform:scaleX(0.8979);transform-origin:0 0;color:#111;-webkit-text-stroke:0.18px #111;">Ziele - durchschnittliche Dauer</span>
<div style="left:49.00px;top:121.50px;width:6.00px;height:1.00px;background:#c6ced8;"></div>
<svg style="left:56.50px;top:117.30px;" width="9.20" height="9.20" viewBox="0 0 10 10"><rect x="0.3" y="0.3" width="9.4" height="9.4" rx="1.4" fill="#1e7ea8" stroke="#1a6c90" stroke-width=".6"/><path d="M2.2 5.2 L4.2 7.2 L7.9 2.9" fill="none" stroke="#fff" stroke-width="1.4" stroke-linecap="round" stroke-linejoin="round"/></svg>
<span class="t" style="left:68.80px;top:117.59px;font-size:8.4px;line-height:1;transform:scaleX(0.8979);transform-origin:0 0;color:#111;-webkit-text-stroke:0.18px #111;">Ziele - zugeordnete Dokumentationen</span>
<div style="left:49.00px;top:134.30px;width:6.00px;height:1.00px;background:#c6ced8;"></div>
<svg style="left:56.50px;top:130.10px;" width="9.20" height="9.20" viewBox="0 0 10 10"><rect x="0.3" y="0.3" width="9.4" height="9.4" rx="1.4" fill="#1e7ea8" stroke="#1a6c90" stroke-width=".6"/><path d="M2.2 5.2 L4.2 7.2 L7.9 2.9" fill="none" stroke="#fff" stroke-width="1.4" stroke-linecap="round" stroke-linejoin="round"/></svg>
<span class="t" style="left:68.80px;top:130.39px;font-size:8.4px;line-height:1;transform:scaleX(0.8979);transform-origin:0 0;color:#111;-webkit-text-stroke:0.18px #111;">Ziele - Info zu Zielarten</span>
<div style="left:49.00px;top:147.10px;width:6.00px;height:1.00px;background:#c6ced8;"></div>
<svg style="left:56.50px;top:142.90px;" width="9.20" height="9.20" viewBox="0 0 10 10"><rect x="0.3" y="0.3" width="9.4" height="9.4" rx="1.4" fill="#1e7ea8" stroke="#1a6c90" stroke-width=".6"/><path d="M2.2 5.2 L4.2 7.2 L7.9 2.9" fill="none" stroke="#fff" stroke-width="1.4" stroke-linecap="round" stroke-linejoin="round"/></svg>
<span class="t" style="left:68.80px;top:143.19px;font-size:8.4px;line-height:1;transform:scaleX(0.8979);transform-origin:0 0;color:#111;-webkit-text-stroke:0.18px #111;">Ziele - Info zu Ergebnissen</span>
<div style="left:49.00px;top:159.90px;width:6.00px;height:1.00px;background:#c6ced8;"></div>
<svg style="left:56.50px;top:155.70px;" width="9.20" height="9.20" viewBox="0 0 10 10"><rect x="0.3" y="0.3" width="9.4" height="9.4" rx="1.4" fill="#1e7ea8" stroke="#1a6c90" stroke-width=".6"/><path d="M2.2 5.2 L4.2 7.2 L7.9 2.9" fill="none" stroke="#fff" stroke-width="1.4" stroke-linecap="round" stroke-linejoin="round"/></svg>
<span class="t" style="left:68.80px;top:155.99px;font-size:8.4px;line-height:1;transform:scaleX(0.8979);transform-origin:0 0;color:#111;-webkit-text-stroke:0.18px #111;">Ziele - abgeschlossen</span>
<div style="left:49.00px;top:172.70px;width:6.00px;height:1.00px;background:#c6ced8;"></div>
<svg style="left:56.50px;top:168.50px;" width="9.20" height="9.20" viewBox="0 0 10 10"><rect x="0.3" y="0.3" width="9.4" height="9.4" rx="1.4" fill="#1e7ea8" stroke="#1a6c90" stroke-width=".6"/><path d="M2.2 5.2 L4.2 7.2 L7.9 2.9" fill="none" stroke="#fff" stroke-width="1.4" stroke-linecap="round" stroke-linejoin="round"/></svg>
<span class="t" style="left:68.80px;top:168.79px;font-size:8.4px;line-height:1;transform:scaleX(0.8979);transform-origin:0 0;color:#111;-webkit-text-stroke:0.18px #111;">Ziele - nicht abgeschlossen</span>
<div style="left:49.00px;top:185.50px;width:6.00px;height:1.00px;background:#c6ced8;"></div>
<svg style="left:56.50px;top:181.30px;" width="9.20" height="9.20" viewBox="0 0 10 10"><rect x="0.3" y="0.3" width="9.4" height="9.4" rx="1.4" fill="#1e7ea8" stroke="#1a6c90" stroke-width=".6"/><path d="M2.2 5.2 L4.2 7.2 L7.9 2.9" fill="none" stroke="#fff" stroke-width="1.4" stroke-linecap="round" stroke-linejoin="round"/></svg>
<span class="t" style="left:68.80px;top:181.59px;font-size:8.4px;line-height:1;transform:scaleX(0.8979);transform-origin:0 0;color:#111;-webkit-text-stroke:0.18px #111;">Ziele - vor Zieltermin abgeschlossen</span>
<div style="left:49.00px;top:198.30px;width:6.00px;height:1.00px;background:#c6ced8;"></div>
<svg style="left:56.50px;top:194.10px;" width="9.20" height="9.20" viewBox="0 0 10 10"><rect x="0.3" y="0.3" width="9.4" height="9.4" rx="1.4" fill="#1e7ea8" stroke="#1a6c90" stroke-width=".6"/><path d="M2.2 5.2 L4.2 7.2 L7.9 2.9" fill="none" stroke="#fff" stroke-width="1.4" stroke-linecap="round" stroke-linejoin="round"/></svg>
<span class="t" style="left:68.80px;top:194.39px;font-size:8.4px;line-height:1;transform:scaleX(0.8979);transform-origin:0 0;color:#111;-webkit-text-stroke:0.18px #111;">Ziele - evaluiert</span>
<div style="left:49.00px;top:211.10px;width:6.00px;height:1.00px;background:#c6ced8;"></div>
<svg style="left:56.50px;top:206.90px;" width="9.20" height="9.20" viewBox="0 0 10 10"><rect x="0.3" y="0.3" width="9.4" height="9.4" rx="1.4" fill="#1e7ea8" stroke="#1a6c90" stroke-width=".6"/><path d="M2.2 5.2 L4.2 7.2 L7.9 2.9" fill="none" stroke="#fff" stroke-width="1.4" stroke-linecap="round" stroke-linejoin="round"/></svg>
<span class="t" style="left:68.80px;top:207.19px;font-size:8.4px;line-height:1;transform:scaleX(0.8979);transform-origin:0 0;color:#111;-webkit-text-stroke:0.18px #111;">Ziele - nicht evaluiert</span>
<div style="left:49.00px;top:223.90px;width:6.00px;height:1.00px;background:#c6ced8;"></div>
<svg style="left:56.50px;top:219.70px;" width="9.20" height="9.20" viewBox="0 0 10 10"><rect x="0.3" y="0.3" width="9.4" height="9.4" rx="1.4" fill="#1e7ea8" stroke="#1a6c90" stroke-width=".6"/><path d="M2.2 5.2 L4.2 7.2 L7.9 2.9" fill="none" stroke="#fff" stroke-width="1.4" stroke-linecap="round" stroke-linejoin="round"/></svg>
<span class="t" style="left:68.80px;top:219.99px;font-size:8.4px;line-height:1;transform:scaleX(0.8979);transform-origin:0 0;color:#111;-webkit-text-stroke:0.18px #111;">Ziele - Anzahl Evaluationen / Ziel</span>
<div style="left:49.00px;top:236.70px;width:6.00px;height:1.00px;background:#c6ced8;"></div>
<svg style="left:56.50px;top:232.50px;" width="9.20" height="9.20" viewBox="0 0 10 10"><rect x="0.3" y="0.3" width="9.4" height="9.4" rx="1.4" fill="#1e7ea8" stroke="#1a6c90" stroke-width=".6"/><path d="M2.2 5.2 L4.2 7.2 L7.9 2.9" fill="none" stroke="#fff" stroke-width="1.4" stroke-linecap="round" stroke-linejoin="round"/></svg>
<span class="t" style="left:68.80px;top:232.79px;font-size:8.4px;line-height:1;transform:scaleX(0.8979);transform-origin:0 0;color:#111;-webkit-text-stroke:0.18px #111;">Maßnahmen - durchschnittliche Dauer</span>
<div style="left:49.00px;top:249.50px;width:6.00px;height:1.00px;background:#c6ced8;"></div>
<svg style="left:56.50px;top:245.30px;" width="9.20" height="9.20" viewBox="0 0 10 10"><rect x="0.3" y="0.3" width="9.4" height="9.4" rx="1.4" fill="#1e7ea8" stroke="#1a6c90" stroke-width=".6"/><path d="M2.2 5.2 L4.2 7.2 L7.9 2.9" fill="none" stroke="#fff" stroke-width="1.4" stroke-linecap="round" stroke-linejoin="round"/></svg>
<span class="t" style="left:68.80px;top:245.59px;font-size:8.4px;line-height:1;transform:scaleX(0.8979);transform-origin:0 0;color:#111;-webkit-text-stroke:0.18px #111;">Maßnahmen - zugeordnete Dokumentationen</span>
<div style="left:49.00px;top:262.30px;width:6.00px;height:1.00px;background:#c6ced8;"></div>
<svg style="left:56.50px;top:258.10px;" width="9.20" height="9.20" viewBox="0 0 10 10"><rect x="0.3" y="0.3" width="9.4" height="9.4" rx="1.4" fill="#1e7ea8" stroke="#1a6c90" stroke-width=".6"/><path d="M2.2 5.2 L4.2 7.2 L7.9 2.9" fill="none" stroke="#fff" stroke-width="1.4" stroke-linecap="round" stroke-linejoin="round"/></svg>
<span class="t" style="left:68.80px;top:258.39px;font-size:8.4px;line-height:1;transform:scaleX(0.8979);transform-origin:0 0;color:#111;-webkit-text-stroke:0.18px #111;">Maßnahmen - Info zu Quittierungen</span>
<div style="left:49.00px;top:275.10px;width:6.00px;height:1.00px;background:#c6ced8;"></div>
<svg style="left:56.50px;top:270.90px;" width="9.20" height="9.20" viewBox="0 0 10 10"><rect x="0.3" y="0.3" width="9.4" height="9.4" rx="1.4" fill="#1e7ea8" stroke="#1a6c90" stroke-width=".6"/><path d="M2.2 5.2 L4.2 7.2 L7.9 2.9" fill="none" stroke="#fff" stroke-width="1.4" stroke-linecap="round" stroke-linejoin="round"/></svg>
<span class="t" style="left:68.80px;top:271.19px;font-size:8.4px;line-height:1;transform:scaleX(0.8979);transform-origin:0 0;color:#111;-webkit-text-stroke:0.18px #111;">Maßnahmen - Info zu Ergebnissen</span>
<div style="left:49.00px;top:287.90px;width:6.00px;height:1.00px;background:#c6ced8;"></div>
<svg style="left:56.50px;top:283.70px;" width="9.20" height="9.20" viewBox="0 0 10 10"><rect x="0.3" y="0.3" width="9.4" height="9.4" rx="1.4" fill="#1e7ea8" stroke="#1a6c90" stroke-width=".6"/><path d="M2.2 5.2 L4.2 7.2 L7.9 2.9" fill="none" stroke="#fff" stroke-width="1.4" stroke-linecap="round" stroke-linejoin="round"/></svg>
<span class="t" style="left:68.80px;top:283.99px;font-size:8.4px;line-height:1;transform:scaleX(0.8979);transform-origin:0 0;color:#111;-webkit-text-stroke:0.18px #111;">Maßnahmen - abgeschlossen</span>
<div style="left:49.00px;top:300.70px;width:6.00px;height:1.00px;background:#c6ced8;"></div>
<svg style="left:56.50px;top:296.50px;" width="9.20" height="9.20" viewBox="0 0 10 10"><rect x="0.3" y="0.3" width="9.4" height="9.4" rx="1.4" fill="#1e7ea8" stroke="#1a6c90" stroke-width=".6"/><path d="M2.2 5.2 L4.2 7.2 L7.9 2.9" fill="none" stroke="#fff" stroke-width="1.4" stroke-linecap="round" stroke-linejoin="round"/></svg>
<span class="t" style="left:68.80px;top:296.79px;font-size:8.4px;line-height:1;transform:scaleX(0.8979);transform-origin:0 0;color:#111;-webkit-text-stroke:0.18px #111;">Maßnahmen - nicht abgeschlossen</span>
</div>
</div>
<div style="left:487.00px;top:329.30px;width:10.60px;height:308.20px;background:#f0f0f0;"></div>
<div style="left:487.00px;top:546.50px;width:10.60px;height:33.20px;background:#c9c9c9;"></div>
<svg style="left:488.70px;top:333.00px;" width="7.20" height="4.80" viewBox="-1 -1 7.2 4.8"><path d="M0 2.8 L2.6 0 L5.2 2.8" fill="none" stroke="#222" stroke-width="1.3"/></svg>
<svg style="left:488.70px;top:628.40px;" width="7.20" height="4.80" viewBox="-1 -1 7.2 4.8"><path d="M0 0 L2.6 2.8 L5.2 0" fill="none" stroke="#222" stroke-width="1.3"/></svg>
<div style="left:226.00px;top:637.50px;width:261.00px;height:11.20px;background:#f0f0f0;"></div>
<div style="left:238.00px;top:637.50px;width:216.00px;height:11.20px;background:#c9c9c9;"></div>
<svg style="left:229.60px;top:639.50px;" width="4.80" height="7.20" viewBox="-1 -1 4.8 7.2"><path d="M2.8 0 L0 2.6 L2.8 5.2" fill="none" stroke="#333" stroke-width="1.2"/></svg>
<svg style="left:477.00px;top:639.50px;" width="4.80" height="7.20" viewBox="-1 -1 4.8 7.2"><path d="M0 0 L2.8 2.6 L0 5.2" fill="none" stroke="#222" stroke-width="1.3"/></svg>
<div style="left:487.00px;top:637.50px;width:10.60px;height:11.20px;background:#f0f0f0;"></div>
<div style="left:530.80px;top:257.70px;width:589.20px;height:388.10px;background:#ebebeb;"></div>
<svg style="left:540.40px;top:265.00px;" width="6.00" height="6.00" viewBox="0 0 6.8 6.8"><path d="M3.4 0 L6.8 3.4 L3.4 6.8 L0 3.4 Z" fill="#2a8fb3"/></svg>
<span class="t" style="left:551.70px;top:262.24px;font-size:10px;line-height:1;font-weight:bold;color:#111;letter-spacing:0.063px;-webkit-text-stroke:.15px #111;">Info zur Evaluation (235 Einträge)</span>
<svg style="left:1000.30px;top:281.60px;" width="9.30" height="9.30" viewBox="0 0 10 10"><rect x="0.3" y="0.3" width="9.4" height="9.4" rx="1.4" fill="#1e7ea8" stroke="#1a6c90" stroke-width=".6"/><path d="M2.2 5.2 L4.2 7.2 L7.9 2.9" fill="none" stroke="#fff" stroke-width="1.4" stroke-linecap="round" stroke-linejoin="round"/></svg>
<span class="t" style="left:1012.50px;top:282.59px;font-size:8.4px;line-height:1;transform:scaleX(0.8842);transform-origin:0 0;color:#111;-webkit-text-stroke:0.18px #111;">Textformatierung übernehmen</span>
<div style="left:1040.8px;top:298.8px;width:71.2px;height:15px;background:#2289b4;border-radius:1.5px;"></div>
<span class="t" style="left:1053.70px;top:302.17px;font-size:8.3px;line-height:1;color:#fff;letter-spacing:-0.094px;-webkit-text-stroke:.15px #fff;">Aktualisieren</span>
<svg style="left:542.50px;top:300.60px;" width="11.60" height="11.40" viewBox="0 0 11.6 11.4"><rect x="0.2" y="0.1" width="8" height="1.6" fill="#3e3e3e"/><circle cx="3.5" cy="7.9" r="3.2" fill="#3d82d2" stroke="#1b4888" stroke-width=".9"/><text x="3.5" y="9.9" font-size="5.4" font-weight="bold" text-anchor="middle" fill="#fff" font-family="Liberation Sans">0</text><path d="M7.4 5 H11.5 M7.4 7.8 H11.5 M7.4 10.6 H11.5" stroke="#3e3e3e" stroke-width="1.25"/></svg>
<svg style="left:562.50px;top:300.60px;" width="11.60" height="11.40" viewBox="0 0 11.6 11.4"><rect x="0.2" y="0.1" width="8" height="1.6" fill="#3e3e3e"/><circle cx="3.5" cy="7.9" r="3.2" fill="#3d82d2" stroke="#1b4888" stroke-width=".9"/><text x="3.5" y="9.9" font-size="5.4" font-weight="bold" text-anchor="middle" fill="#fff" font-family="Liberation Sans">1</text><path d="M7.4 5 H11.5 M7.4 7.8 H11.5 M7.4 10.6 H11.5" stroke="#3e3e3e" stroke-width="1.25"/></svg>
<svg style="left:582.50px;top:300.60px;" width="11.60" height="11.40" viewBox="0 0 11.6 11.4"><rect x="0.2" y="0.1" width="8" height="1.6" fill="#3e3e3e"/><circle cx="3.5" cy="7.9" r="3.2" fill="#3d82d2" stroke="#1b4888" stroke-width=".9"/><text x="3.5" y="9.9" font-size="5.4" font-weight="bold" text-anchor="middle" fill="#fff" font-family="Liberation Sans">2</text><path d="M7.4 5 H11.5 M7.4 7.8 H11.5 M7.4 10.6 H11.5" stroke="#3e3e3e" stroke-width="1.25"/></svg>
<svg style="left:602.50px;top:300.60px;" width="11.60" height="11.40" viewBox="0 0 11.6 11.4"><rect x="0.2" y="0.1" width="8" height="1.6" fill="#3e3e3e"/><circle cx="3.5" cy="7.9" r="3.2" fill="#3d82d2" stroke="#1b4888" stroke-width=".9"/><text x="3.5" y="9.9" font-size="5.4" font-weight="bold" text-anchor="middle" fill="#fff" font-family="Liberation Sans">3</text><path d="M7.4 5 H11.5 M7.4 7.8 H11.5 M7.4 10.6 H11.5" stroke="#3e3e3e" stroke-width="1.25"/></svg>
<div style="left:539.00px;top:323.30px;width:573.00px;height:314.40px;background:#fff;"></div>
<div style="left:539.00px;top:323.30px;width:573.00px;height:14.20px;background:#f8f8f8;"></div>
<span class="t" style="left:575.30px;top:327.39px;font-size:8.4px;line-height:1;transform:scaleX(0.9223);transform-origin:0 0;color:#111;-webkit-text-stroke:0.18px #111;">Zeitpunkt / Zeitraum</span>
<span class="t" style="left:668.00px;top:327.39px;font-size:8.4px;line-height:1;transform:scaleX(0.8591);transform-origin:0 0;color:#111;-webkit-text-stroke:0.18px #111;">Information</span>
<span class="t" style="left:944.70px;top:327.39px;font-size:8.4px;line-height:1;transform:scaleX(0.8863);transform-origin:0 0;color:#111;-webkit-text-stroke:0.18px #111;">letzte Änderung</span>
<span class="t" style="left:1020.00px;top:327.39px;font-size:8.4px;line-height:1;transform:scaleX(0.8959);transform-origin:0 0;color:#111;-webkit-text-stroke:0.18px #111;">Handzeichen</span>
<div style="left:544.30px;top:337.50px;width:1.00px;height:276.60px;background:#9a9a9a;"></div>
<div style="left:544.30px;top:613.60px;width:8.00px;height:1.00px;background:#9a9a9a;"></div>
<div style="left:553.40px;top:337.50px;width:1.00px;height:276.60px;background:#9a9a9a;"></div>
<div style="left:561.80px;top:337.50px;width:1.00px;height:98.80px;background:#9a9a9a;"></div>
<span class="t" style="left:668.00px;top:341.09px;font-size:8.4px;line-height:1;transform:scaleX(0.8883);transform-origin:0 0;color:#111;-webkit-text-stroke:0.18px #111;">Bis zum Ende des Jahres soll Herr Ahrens selbständig zur Werkstatt kommen</span>
<span class="t" style="left:668.00px;top:356.89px;font-size:8.4px;line-height:1;transform:scaleX(0.9123);transform-origin:0 0;font-style:italic;color:#111;-webkit-text-stroke:0.18px #111;">(aus Planung Teilhabeplanung Wohnen: 24.04.2019 - __.__.____)</span>
<div style="left:561.80px;top:375.10px;width:11.40px;height:1.00px;background:#9a9a9a;"></div>
<svg style="left:560.60px;top:372.50px;" width="5.60" height="5.60" viewBox="0 0 5.6 5.6"><rect x="0.4" y="0.4" width="4.8" height="4.8" rx="1.2" fill="#fff" stroke="#8a8a8a" stroke-width=".8"/><path d="M1.5 2.8 H4.1" stroke="#222" stroke-width=".9"/></svg>
<span class="t" style="left:575.30px;top:371.82px;font-size:8.6px;line-height:1;font-weight:bold;color:#111;letter-spacing:-0.090px;-webkit-text-stroke:.15px #111;text-decoration:underline;text-decoration-thickness:.9px;text-underline-offset:1px;">Andresen, Rita</span>
<svg style="left:1090.00px;top:369.50px;" width="10.40" height="10.60" viewBox="0 0 14.4 14.6"><path d="M3.3 9.6 C2.2 4.2 3.9 0.4 7.2 0.4 C10.5 0.4 12.2 4.2 11.1 9.6 Z" fill="#555257"/><path d="M0.3 14.3 C0.3 10.8 2.4 9.8 4.6 9.1 H9.8 C12 9.8 14.1 10.8 14.1 14.3 Z" fill="#6f2d8f"/><path d="M5 8.9 C4.5 10.4 4.1 12.2 4.5 12.7 H9.9 C10.3 12.2 9.9 10.4 9.4 8.9 L8.2 8.2 H6.2 Z" fill="#fbeefb"/><path d="M6.2 9.2 L7.2 9.9 L8.2 9.2" fill="none" stroke="#6a5a70" stroke-width=".5"/><path d="M7.2 2.9 C8.9 2.9 9.8 4.2 9.7 5.8 C9.6 7.7 8.5 9.1 7.2 9.1 C5.9 9.1 4.8 7.7 4.7 5.8 C4.6 4.2 5.5 2.9 7.2 2.9 Z" fill="#fff"/><path d="M4.8 5.4 C5.4 4 6.4 3.6 7.6 4.4 C8.2 3.8 9.2 3.8 9.6 5 C9.4 2.6 5 2.2 4.8 5.4 Z" fill="#555257"/></svg>
<div style="left:561.80px;top:389.40px;width:10.90px;height:1.00px;background:#9a9a9a;"></div>
<span class="t" style="left:575.30px;top:385.19px;font-size:8.4px;line-height:1;transform:scaleX(0.9093);transform-origin:0 0;color:#111;-webkit-text-stroke:0.18px #111;">01.08.2020 - __.__.____</span>
<span class="t" style="left:668.00px;top:385.19px;font-size:8.4px;line-height:1;transform:scaleX(0.8148);transform-origin:0 0;color:#111;-webkit-text-stroke:0.18px #111;text-decoration:underline;text-decoration-thickness:.8px;text-underline-offset:1px;">Ziel</span>
<span class="t" style="left:945.00px;top:385.79px;font-size:8.4px;line-height:1;transform:scaleX(0.9109);transform-origin:0 0;color:#111;-webkit-text-stroke:0.18px #111;">27.06.2023 09:38:48</span>
<span class="t" style="left:1020.00px;top:385.79px;font-size:8.4px;line-height:1;transform:scaleX(0.8730);transform-origin:0 0;color:#111;-webkit-text-stroke:0.18px #111;">SU (Superuser)</span>
<span class="t" style="left:668.00px;top:400.29px;font-size:8.4px;line-height:1;transform:scaleX(0.8861);transform-origin:0 0;color:#111;-webkit-text-stroke:0.18px #111;">Achtet auf ihre Gesundheit und nimmt regelmäßig Arzttermine wahr</span>
<span class="t" style="left:668.00px;top:416.79px;font-size:8.4px;line-height:1;transform:scaleX(0.9123);transform-origin:0 0;font-style:italic;color:#111;-webkit-text-stroke:0.18px #111;">(aus Planung Teilhabeplanung Wohnen: 01.08.2020 - __.__.____)</span>
<div style="left:561.80px;top:436.00px;width:10.90px;height:1.00px;background:#9a9a9a;"></div>
<span class="t" style="left:575.30px;top:431.79px;font-size:8.4px;line-height:1;transform:scaleX(0.9093);transform-origin:0 0;color:#111;-webkit-text-stroke:0.18px #111;">01.08.2020 - __.__.____</span>
<span class="t" style="left:668.00px;top:431.79px;font-size:8.4px;line-height:1;transform:scaleX(0.8148);transform-origin:0 0;color:#111;-webkit-text-stroke:0.18px #111;text-decoration:underline;text-decoration-thickness:.8px;text-underline-offset:1px;">Ziel</span>
<span class="t" style="left:945.00px;top:432.39px;font-size:8.4px;line-height:1;transform:scaleX(0.9182);transform-origin:0 0;color:#111;-webkit-text-stroke:0.18px #111;">04.09.2023 11:41:48</span>
<span class="t" style="left:1020.00px;top:432.39px;font-size:8.4px;line-height:1;transform:scaleX(0.8730);transform-origin:0 0;color:#111;-webkit-text-stroke:0.18px #111;">SU (Superuser)</span>
<span class="t" style="left:668.00px;top:446.89px;font-size:8.4px;line-height:1;transform:scaleX(0.8968);transform-origin:0 0;color:#111;-webkit-text-stroke:0.18px #111;">Kauft für den täglichen Bedarf selbst ein</span>
<span class="t" style="left:668.00px;top:463.39px;font-size:8.4px;line-height:1;transform:scaleX(0.9123);transform-origin:0 0;font-style:italic;color:#111;-webkit-text-stroke:0.18px #111;">(aus Planung Teilhabeplanung Wohnen: 01.08.2020 - __.__.____)</span>
<div style="left:554.00px;top:482.50px;width:19.00px;height:1.00px;background:#9a9a9a;"></div>
<svg style="left:552.20px;top:480.10px;" width="5.60" height="5.60" viewBox="0 0 5.6 5.6"><rect x="0.4" y="0.4" width="4.8" height="4.8" rx="1.2" fill="#fff" stroke="#8a8a8a" stroke-width=".8"/><path d="M1.5 2.8 H4.1" stroke="#222" stroke-width=".9"/><path d="M2.8 1.5 V4.1" stroke="#222" stroke-width=".9"/></svg>
<span class="t" style="left:575.60px;top:479.40px;font-size:8.5px;line-height:1;font-weight:bold;color:#0a0a0a;transform:scaleX(1.12);transform-origin:0 0;-webkit-text-stroke:.15px #0a0a0a;"><span style="letter-spacing:0.027px">Ziele - nicht evaluiert</span><i style="letter-spacing:0.072px"> (vorhandene Ziele: 6 | nicht evaluiert: 6)</i></span>
<div style="left:554.00px;top:498.97px;width:19.00px;height:1.00px;background:#9a9a9a;"></div>
<svg style="left:552.20px;top:496.57px;" width="5.60" height="5.60" viewBox="0 0 5.6 5.6"><rect x="0.4" y="0.4" width="4.8" height="4.8" rx="1.2" fill="#fff" stroke="#8a8a8a" stroke-width=".8"/><path d="M1.5 2.8 H4.1" stroke="#222" stroke-width=".9"/><path d="M2.8 1.5 V4.1" stroke="#222" stroke-width=".9"/></svg>
<span class="t" style="left:575.60px;top:495.87px;font-size:8.5px;line-height:1;font-weight:bold;color:#0a0a0a;transform:scaleX(1.12);transform-origin:0 0;-webkit-text-stroke:.15px #0a0a0a;"><span style="letter-spacing:0.080px">Ziele - Anzahl Evaluationen / Ziel</span><i style="letter-spacing:0.062px"> (vorhandene Ziele: 6 | Evaluationen: 7)</i></span>
<div style="left:554.00px;top:515.44px;width:19.00px;height:1.00px;background:#9a9a9a;"></div>
<svg style="left:552.20px;top:513.04px;" width="5.60" height="5.60" viewBox="0 0 5.6 5.6"><rect x="0.4" y="0.4" width="4.8" height="4.8" rx="1.2" fill="#fff" stroke="#8a8a8a" stroke-width=".8"/><path d="M1.5 2.8 H4.1" stroke="#222" stroke-width=".9"/><path d="M2.8 1.5 V4.1" stroke="#222" stroke-width=".9"/></svg>
<span class="t" style="left:575.60px;top:512.34px;font-size:8.5px;line-height:1;font-weight:bold;color:#0a0a0a;transform:scaleX(1.12);transform-origin:0 0;-webkit-text-stroke:.15px #0a0a0a;"><span style="letter-spacing:0.018px">Maßnahmen - durchschnittliche Dauer</span><i style="letter-spacing:0.133px"> (vorhandene Maßnahmen: 15 | Ø Dauer in Tagen: 1059)</i></span>
<div style="left:554.00px;top:531.91px;width:19.00px;height:1.00px;background:#9a9a9a;"></div>
<svg style="left:552.20px;top:529.51px;" width="5.60" height="5.60" viewBox="0 0 5.6 5.6"><rect x="0.4" y="0.4" width="4.8" height="4.8" rx="1.2" fill="#fff" stroke="#8a8a8a" stroke-width=".8"/><path d="M1.5 2.8 H4.1" stroke="#222" stroke-width=".9"/><path d="M2.8 1.5 V4.1" stroke="#222" stroke-width=".9"/></svg>
<span class="t" style="left:575.60px;top:528.81px;font-size:8.5px;line-height:1;font-weight:bold;color:#0a0a0a;transform:scaleX(1.12);transform-origin:0 0;-webkit-text-stroke:.15px #0a0a0a;"><span style="letter-spacing:0.047px">Maßnahmen - zugeordnete Dokumentationen</span><i style="letter-spacing:0.093px"> (vorhandene Maßnahmen: 15 | Dauer (einfach) aus (1) zugeordnete...</i></span>
<div style="left:554.00px;top:548.38px;width:19.00px;height:1.00px;background:#9a9a9a;"></div>
<svg style="left:552.20px;top:545.98px;" width="5.60" height="5.60" viewBox="0 0 5.6 5.6"><rect x="0.4" y="0.4" width="4.8" height="4.8" rx="1.2" fill="#fff" stroke="#8a8a8a" stroke-width=".8"/><path d="M1.5 2.8 H4.1" stroke="#222" stroke-width=".9"/><path d="M2.8 1.5 V4.1" stroke="#222" stroke-width=".9"/></svg>
<span class="t" style="left:575.60px;top:545.28px;font-size:8.5px;line-height:1;font-weight:bold;color:#0a0a0a;transform:scaleX(1.12);transform-origin:0 0;-webkit-text-stroke:.15px #0a0a0a;"><span style="letter-spacing:0.032px">Maßnahmen - Info zu Quittierungen</span><i style="letter-spacing:0.057px"> (vorhandene Quittierungsdaten: 113 | offen / nicht bearbeitet: 109)</i></span>
<div style="left:554.00px;top:564.85px;width:19.00px;height:1.00px;background:#9a9a9a;"></div>
<svg style="left:552.20px;top:562.45px;" width="5.60" height="5.60" viewBox="0 0 5.6 5.6"><rect x="0.4" y="0.4" width="4.8" height="4.8" rx="1.2" fill="#fff" stroke="#8a8a8a" stroke-width=".8"/><path d="M1.5 2.8 H4.1" stroke="#222" stroke-width=".9"/><path d="M2.8 1.5 V4.1" stroke="#222" stroke-width=".9"/></svg>
<span class="t" style="left:575.60px;top:561.75px;font-size:8.5px;line-height:1;font-weight:bold;color:#0a0a0a;transform:scaleX(1.12);transform-origin:0 0;-webkit-text-stroke:.15px #0a0a0a;"><span style="letter-spacing:0.065px">Maßnahmen - Info zu Ergebnissen</span><i style="letter-spacing:0.079px"> (vorhandene Maßnahmen: 15 | ohne Ergebnis: 15)</i></span>
<div style="left:554.00px;top:581.32px;width:19.00px;height:1.00px;background:#9a9a9a;"></div>
<svg style="left:552.20px;top:578.92px;" width="5.60" height="5.60" viewBox="0 0 5.6 5.6"><rect x="0.4" y="0.4" width="4.8" height="4.8" rx="1.2" fill="#fff" stroke="#8a8a8a" stroke-width=".8"/><path d="M1.5 2.8 H4.1" stroke="#222" stroke-width=".9"/><path d="M2.8 1.5 V4.1" stroke="#222" stroke-width=".9"/></svg>
<span class="t" style="left:575.60px;top:578.22px;font-size:8.5px;line-height:1;font-weight:bold;color:#0a0a0a;transform:scaleX(1.12);transform-origin:0 0;-webkit-text-stroke:.15px #0a0a0a;"><span style="letter-spacing:0.018px">Maßnahmen - nicht abgeschlossen</span><i style="letter-spacing:0.060px"> (vorhandene Maßnahmen: 15 | nicht abgeschlossen: 15)</i></span>
<div style="left:554.00px;top:597.79px;width:19.00px;height:1.00px;background:#9a9a9a;"></div>
<svg style="left:552.20px;top:595.39px;" width="5.60" height="5.60" viewBox="0 0 5.6 5.6"><rect x="0.4" y="0.4" width="4.8" height="4.8" rx="1.2" fill="#fff" stroke="#8a8a8a" stroke-width=".8"/><path d="M1.5 2.8 H4.1" stroke="#222" stroke-width=".9"/><path d="M2.8 1.5 V4.1" stroke="#222" stroke-width=".9"/></svg>
<span class="t" style="left:575.60px;top:594.69px;font-size:8.5px;line-height:1;font-weight:bold;color:#0a0a0a;transform:scaleX(1.12);transform-origin:0 0;-webkit-text-stroke:.15px #0a0a0a;"><span style="letter-spacing:0.028px">Maßnahmen - nicht evaluiert</span><i style="letter-spacing:0.083px"> (vorhandene Maßnahmen: 15 | nicht evaluiert: 15)</i></span>
<div style="left:554.00px;top:614.26px;width:19.00px;height:1.00px;background:#9a9a9a;"></div>
<svg style="left:552.20px;top:611.86px;" width="5.60" height="5.60" viewBox="0 0 5.6 5.6"><rect x="0.4" y="0.4" width="4.8" height="4.8" rx="1.2" fill="#fff" stroke="#8a8a8a" stroke-width=".8"/><path d="M1.5 2.8 H4.1" stroke="#222" stroke-width=".9"/><path d="M2.8 1.5 V4.1" stroke="#222" stroke-width=".9"/></svg>
<span class="t" style="left:575.60px;top:611.16px;font-size:8.5px;line-height:1;font-weight:bold;color:#0a0a0a;transform:scaleX(1.12);transform-origin:0 0;-webkit-text-stroke:.15px #0a0a0a;"><span style="letter-spacing:0.076px">Maßnahmen - Anzahl Evaluationen / Maßnahme</span><i style="letter-spacing:0.078px"> (vorhandene Maßnahmen: 15 | Evaluationen: 2)</i></span>
<div style="left:1100.80px;top:323.30px;width:10.80px;height:303.40px;background:#f0f0f0;"></div>
<div style="left:1100.80px;top:497.50px;width:10.80px;height:115.80px;background:#c9c9c9;"></div>
<svg style="left:1102.60px;top:328.40px;" width="7.20" height="4.80" viewBox="-1 -1 7.2 4.8"><path d="M0 2.8 L2.6 0 L5.2 2.8" fill="none" stroke="#222" stroke-width="1.3"/></svg>
<svg style="left:1102.60px;top:616.60px;" width="7.20" height="4.80" viewBox="-1 -1 7.2 4.8"><path d="M0 0 L2.6 2.8 L5.2 0" fill="none" stroke="#222" stroke-width="1.3"/></svg>
<div style="left:539.00px;top:626.70px;width:561.80px;height:11.00px;background:#f0f0f0;"></div>
<div style="left:551.30px;top:626.70px;width:11.70px;height:11.00px;background:#c9c9c9;"></div>
<svg style="left:542.40px;top:628.60px;" width="4.80" height="7.20" viewBox="-1 -1 4.8 7.2"><path d="M2.8 0 L0 2.6 L2.8 5.2" fill="none" stroke="#333" stroke-width="1.2"/></svg>
<svg style="left:1091.60px;top:628.60px;" width="4.80" height="7.20" viewBox="-1 -1 4.8 7.2"><path d="M0 0 L2.8 2.6 L0 5.2" fill="none" stroke="#222" stroke-width="1.3"/></svg>
<div style="left:1100.80px;top:626.70px;width:11.20px;height:11.00px;background:#f0f0f0;"></div>
</body></html>
